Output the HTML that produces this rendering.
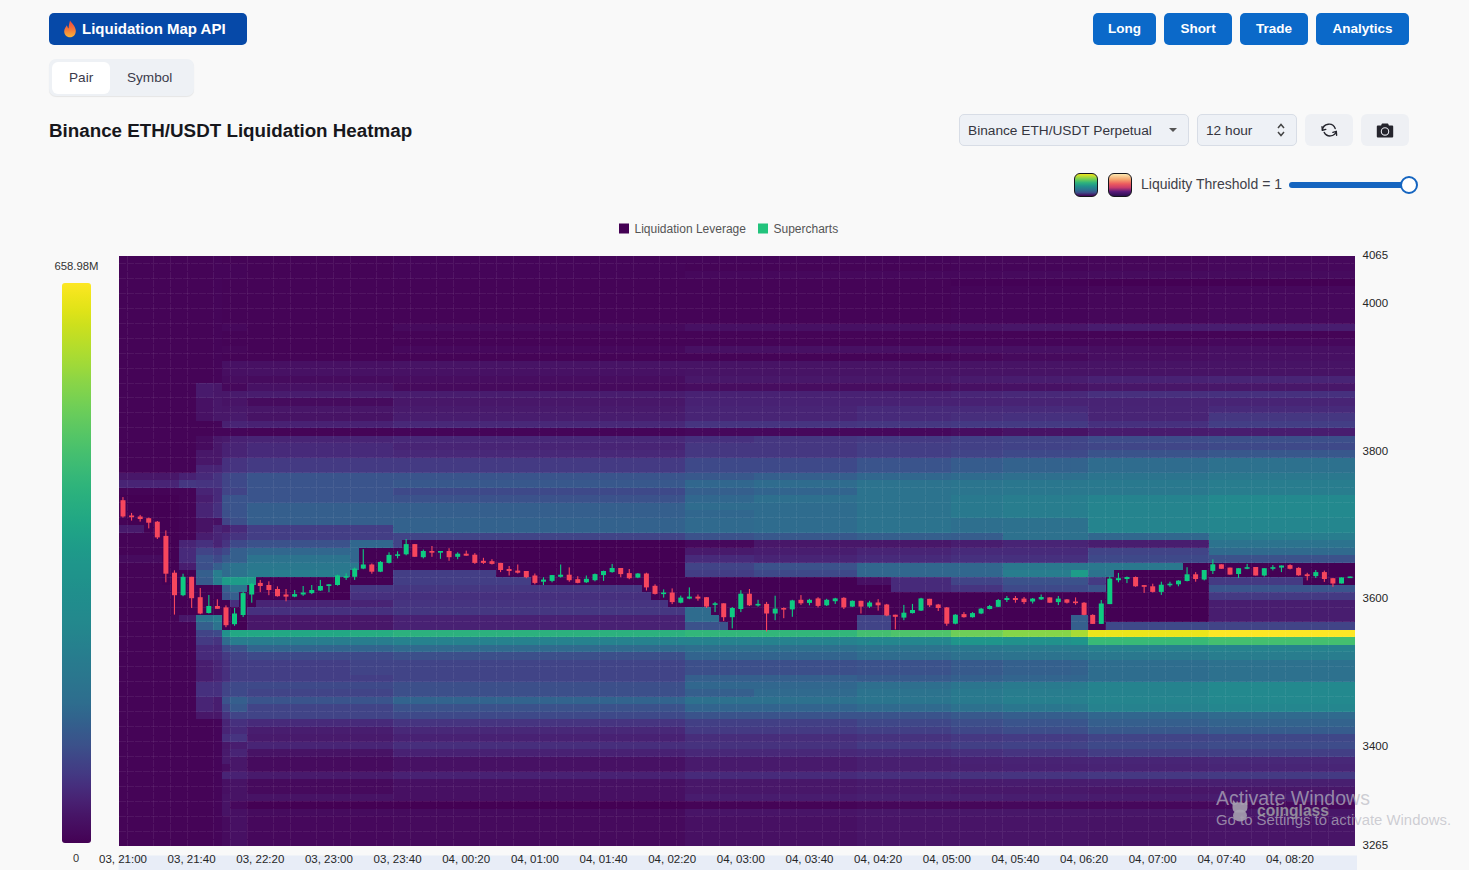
<!DOCTYPE html>
<html><head><meta charset="utf-8">
<style>
*{box-sizing:border-box;margin:0;padding:0}
html,body{width:1469px;height:870px;overflow:hidden;background:#f9f9f9;font-family:"Liberation Sans", sans-serif;}
.abs{position:absolute}
.btn{position:absolute;top:13px;height:32px;background:#0b69c9;color:#fff;border-radius:5px;font-weight:bold;font-size:13.5px;line-height:32px;text-align:center}
.api{position:absolute;left:49px;top:13px;width:198px;height:32px;background:#0649a8;border-radius:5px;color:#fff;font-size:15px;font-weight:bold;line-height:32px}
.seg{position:absolute;left:49px;top:59px;width:145px;height:37px;background:#eef1f5;border-radius:7px;box-shadow:0 1px 1px rgba(0,0,0,0.08)}
.pill{position:absolute;left:3px;top:3px;width:58px;height:32px;background:#fff;border-radius:6px}
.segt{position:absolute;top:0;line-height:37px;font-size:13.6px;color:#3b3b4b}
.title{position:absolute;left:49px;top:120px;font-size:18.8px;font-weight:bold;color:#17171c;white-space:nowrap}
.sel{position:absolute;top:114px;height:32px;background:#eef1f6;border:1px solid #d8dde6;border-radius:5px;font-size:13.7px;color:#353540;line-height:31px;padding-left:8px;white-space:nowrap}
.ib{position:absolute;top:114px;width:48px;height:32px;background:#eef0f4;border-radius:6px}
.sw{position:absolute;top:173px;width:24px;height:24px;border-radius:6px;border:1.6px solid #15151c}
.lt{position:absolute;left:1141px;top:175px;font-size:14px;color:#404048;white-space:nowrap;line-height:18px}
.wm{position:absolute;color:rgba(185,185,195,0.7);white-space:nowrap}
</style></head><body>
<div class="api"><svg class="abs" style="left:14px;top:7px" width="14" height="18" viewBox="0 0 14 18">
<defs><linearGradient id="fl" x1="0" y1="0" x2="0" y2="1"><stop offset="0" stop-color="#f0463c"/><stop offset="0.55" stop-color="#f47a3a"/><stop offset="1" stop-color="#fbb437"/></linearGradient></defs>
<path d="M7 0.5 C8.5 3 12.5 6 12.8 10.5 C13 14.5 10.3 17.3 7 17.3 C3.6 17.3 1 14.6 1.2 11 C1.4 8.2 3 7 3.8 5.2 C4.6 7 5 8 5.6 8.5 C5.8 5.5 6.3 3 7 0.5 Z" fill="url(#fl)"/>
</svg><span class="abs" style="left:33px;top:0">Liquidation Map API</span></div>
<div class="seg"><div class="pill"></div><span class="segt" style="left:20px">Pair</span><span class="segt" style="left:78px">Symbol</span></div>
<div class="title">Binance ETH/USDT Liquidation Heatmap</div>

<div class="btn" style="left:1093px;width:63px">Long</div>
<div class="btn" style="left:1164px;width:68px">Short</div>
<div class="btn" style="left:1240px;width:68px">Trade</div>
<div class="btn" style="left:1316px;width:93px">Analytics</div>

<div class="sel" style="left:959px;width:230px">Binance ETH/USDT Perpetual<svg class="abs" style="left:208px;top:12px" width="10" height="6"><path d="M1 1 L5 5 L9 1 Z" fill="#555"/></svg></div>
<div class="sel" style="left:1197px;width:100px">12 hour<svg class="abs" style="left:78px;top:7px" width="10" height="16" viewBox="0 0 10 16"><path d="M2 6 L5 2.5 L8 6 M2 10 L5 13.5 L8 10" stroke="#444" stroke-width="1.5" fill="none"/></svg></div>
<div class="ib" style="left:1305px"><svg class="abs" style="left:15px;top:7px" width="18" height="18" viewBox="0 0 18 18"><g fill="none" stroke="#25252d" stroke-width="1.4" stroke-linecap="round" stroke-linejoin="round"><path d="M2.4 9.2 A6.6 6.6 0 0 1 15.2 7.6"/><path d="M2.0 5.6 L2.4 9.2 L5.8 8.4"/><path d="M4.2 11.4 A6.6 6.6 0 0 0 16.3 10.4"/><path d="M16.6 14.2 L16.3 10.4 L12.9 11.4"/></g></svg></div>
<div class="ib" style="left:1361px"><svg class="abs" style="left:15px;top:9px" width="18" height="16" viewBox="0 0 18 16"><path d="M5.6 1.2 Q5.8 0.6 6.4 0.6 L11.6 0.6 Q12.2 0.6 12.4 1.2 L12.9 2.6 L16.2 2.6 Q17.2 2.6 17.2 3.6 L17.2 13.6 Q17.2 14.6 16.2 14.6 L1.8 14.6 Q0.8 14.6 0.8 13.6 L0.8 3.6 Q0.8 2.6 1.8 2.6 L5.1 2.6 Z" fill="#25252d"/><circle cx="9" cy="8.4" r="3.7" fill="none" stroke="#e8eaf0" stroke-width="1.1"/><circle cx="9" cy="8.4" r="2.3" fill="#25252d"/></svg></div>

<div class="sw" style="left:1074px;background:linear-gradient(to bottom,#f0e51c 0%,#7ad151 22%,#2db27d 40%,#21918c 55%,#2c718e 72%,#3b528b 84%,#440154 100%)"></div>
<div class="sw" style="left:1108px;background:linear-gradient(to bottom,#fce9b0 0%,#f4a46f 25%,#ec5a5e 45%,#c83c6c 62%,#5a1a7a 80%,#2a0f4e 100%)"></div>
<div class="lt">Liquidity Threshold = 1</div>
<div class="abs" style="left:1289px;top:181.5px;width:120px;height:6px;background:#1565c0;border-radius:3px"></div>
<div class="abs" style="left:1400px;top:176px;width:18px;height:18px;background:#fff;border:2.5px solid #1565c0;border-radius:50%"></div>

<svg class="abs" style="left:0;top:0" width="1469" height="870">
<defs><linearGradient id="cb" x1="0" y1="0" x2="0" y2="1"><stop offset="0.000" stop-color="#fde724"/><stop offset="0.025" stop-color="#eee51b"/><stop offset="0.050" stop-color="#dfe318"/><stop offset="0.075" stop-color="#cde01d"/><stop offset="0.100" stop-color="#bdde26"/><stop offset="0.125" stop-color="#addc30"/><stop offset="0.150" stop-color="#9dd93a"/><stop offset="0.175" stop-color="#8bd546"/><stop offset="0.200" stop-color="#7cd24f"/><stop offset="0.225" stop-color="#6dce58"/><stop offset="0.250" stop-color="#60c960"/><stop offset="0.275" stop-color="#53c567"/><stop offset="0.300" stop-color="#47c06e"/><stop offset="0.325" stop-color="#3dbb74"/><stop offset="0.350" stop-color="#33b679"/><stop offset="0.375" stop-color="#2bb17d"/><stop offset="0.400" stop-color="#26ac81"/><stop offset="0.425" stop-color="#21a784"/><stop offset="0.450" stop-color="#1fa187"/><stop offset="0.475" stop-color="#1e9b89"/><stop offset="0.500" stop-color="#1f968b"/><stop offset="0.525" stop-color="#1f938b"/><stop offset="0.550" stop-color="#208f8c"/><stop offset="0.575" stop-color="#218c8d"/><stop offset="0.600" stop-color="#23898d"/><stop offset="0.625" stop-color="#24858d"/><stop offset="0.650" stop-color="#26808e"/><stop offset="0.675" stop-color="#287b8e"/><stop offset="0.700" stop-color="#2a778e"/><stop offset="0.725" stop-color="#2c728e"/><stop offset="0.750" stop-color="#2e6d8e"/><stop offset="0.775" stop-color="#31648d"/><stop offset="0.800" stop-color="#365a8c"/><stop offset="0.825" stop-color="#3b518a"/><stop offset="0.850" stop-color="#3f4587"/><stop offset="0.875" stop-color="#433a83"/><stop offset="0.900" stop-color="#462d7c"/><stop offset="0.925" stop-color="#482172"/><stop offset="0.950" stop-color="#471567"/><stop offset="0.975" stop-color="#460b5e"/><stop offset="1.000" stop-color="#440154"/></linearGradient></defs>
<g font-family='"Liberation Sans", sans-serif' font-size="12" fill="#555">
<rect x="619" y="223.5" width="10" height="10" fill="#440154"/>
<text x="634.5" y="232.5">Liquidation Leverage</text>
<rect x="758" y="223.5" width="10" height="10" fill="#22c37c"/>
<text x="773.5" y="232.5">Supercharts</text>
</g>
<g font-family='"Liberation Sans", sans-serif' font-size="11" fill="#333">
<text x="76.5" y="270" text-anchor="middle" font-size="11.3">658.98M</text>
<text x="76" y="862" text-anchor="middle">0</text>
</g>
<rect x="62" y="283" width="29" height="560" rx="3" fill="url(#cb)"/>
<rect x="118.6" y="855.5" width="1238.4" height="15" fill="#e8edf7"/>
<g shape-rendering="crispEdges">
<rect x="118.70" y="838.53" width="94.69" height="7.77" fill="#450457"/>
<rect x="213.09" y="838.53" width="8.88" height="7.77" fill="#450559"/>
<rect x="221.68" y="838.53" width="8.88" height="7.77" fill="#460b5e"/>
<rect x="230.26" y="838.53" width="17.46" height="7.77" fill="#471063"/>
<rect x="247.42" y="838.53" width="146.18" height="7.77" fill="#46085c"/>
<rect x="393.30" y="838.53" width="292.06" height="7.77" fill="#460a5d"/>
<rect x="685.06" y="838.53" width="171.93" height="7.77" fill="#471063"/>
<rect x="856.69" y="838.53" width="231.99" height="7.77" fill="#481467"/>
<rect x="1088.38" y="838.53" width="120.44" height="7.77" fill="#471365"/>
<rect x="1208.52" y="838.53" width="146.18" height="7.77" fill="#481467"/>
<rect x="118.70" y="831.06" width="94.69" height="7.77" fill="#450457"/>
<rect x="213.09" y="831.06" width="8.88" height="7.77" fill="#450559"/>
<rect x="221.68" y="831.06" width="8.88" height="7.77" fill="#460b5e"/>
<rect x="230.26" y="831.06" width="17.46" height="7.77" fill="#471063"/>
<rect x="247.42" y="831.06" width="146.18" height="7.77" fill="#46085c"/>
<rect x="393.30" y="831.06" width="292.06" height="7.77" fill="#460a5d"/>
<rect x="685.06" y="831.06" width="171.93" height="7.77" fill="#471063"/>
<rect x="856.69" y="831.06" width="231.99" height="7.77" fill="#481467"/>
<rect x="1088.38" y="831.06" width="120.44" height="7.77" fill="#471365"/>
<rect x="1208.52" y="831.06" width="146.18" height="7.77" fill="#481467"/>
<rect x="118.70" y="823.59" width="94.69" height="7.77" fill="#450457"/>
<rect x="213.09" y="823.59" width="8.88" height="7.77" fill="#450559"/>
<rect x="221.68" y="823.59" width="8.88" height="7.77" fill="#460b5e"/>
<rect x="230.26" y="823.59" width="17.46" height="7.77" fill="#471063"/>
<rect x="247.42" y="823.59" width="146.18" height="7.77" fill="#46085c"/>
<rect x="393.30" y="823.59" width="292.06" height="7.77" fill="#460a5d"/>
<rect x="685.06" y="823.59" width="171.93" height="7.77" fill="#471063"/>
<rect x="856.69" y="823.59" width="231.99" height="7.77" fill="#481467"/>
<rect x="1088.38" y="823.59" width="120.44" height="7.77" fill="#471365"/>
<rect x="1208.52" y="823.59" width="146.18" height="7.77" fill="#481467"/>
<rect x="118.70" y="816.13" width="94.69" height="7.77" fill="#450457"/>
<rect x="213.09" y="816.13" width="8.88" height="7.77" fill="#450559"/>
<rect x="221.68" y="816.13" width="8.88" height="7.77" fill="#460b5e"/>
<rect x="230.26" y="816.13" width="17.46" height="7.77" fill="#471063"/>
<rect x="247.42" y="816.13" width="146.18" height="7.77" fill="#46085c"/>
<rect x="393.30" y="816.13" width="292.06" height="7.77" fill="#460a5d"/>
<rect x="685.06" y="816.13" width="171.93" height="7.77" fill="#471063"/>
<rect x="856.69" y="816.13" width="231.99" height="7.77" fill="#481467"/>
<rect x="1088.38" y="816.13" width="120.44" height="7.77" fill="#471365"/>
<rect x="1208.52" y="816.13" width="146.18" height="7.77" fill="#481467"/>
<rect x="118.70" y="808.66" width="94.69" height="7.77" fill="#450457"/>
<rect x="213.09" y="808.66" width="8.88" height="7.77" fill="#450559"/>
<rect x="221.68" y="808.66" width="8.88" height="7.77" fill="#471365"/>
<rect x="230.26" y="808.66" width="17.46" height="7.77" fill="#471063"/>
<rect x="247.42" y="808.66" width="437.94" height="7.77" fill="#460b5e"/>
<rect x="685.06" y="808.66" width="171.93" height="7.77" fill="#481467"/>
<rect x="856.69" y="808.66" width="231.99" height="7.77" fill="#481769"/>
<rect x="1088.38" y="808.66" width="120.44" height="7.77" fill="#481668"/>
<rect x="1208.52" y="808.66" width="146.18" height="7.77" fill="#481769"/>
<rect x="118.70" y="801.19" width="94.69" height="7.77" fill="#450457"/>
<rect x="213.09" y="801.19" width="8.88" height="7.77" fill="#450559"/>
<rect x="221.68" y="801.19" width="8.88" height="7.77" fill="#471365"/>
<rect x="230.26" y="801.19" width="17.46" height="7.77" fill="#46085c"/>
<rect x="247.42" y="801.19" width="437.94" height="7.77" fill="#440154"/>
<rect x="685.06" y="801.19" width="171.93" height="7.77" fill="#450457"/>
<rect x="856.69" y="801.19" width="146.18" height="7.77" fill="#46075a"/>
<rect x="1002.57" y="801.19" width="206.25" height="7.77" fill="#46085c"/>
<rect x="1208.52" y="801.19" width="146.18" height="7.77" fill="#460a5d"/>
<rect x="118.70" y="793.72" width="94.69" height="7.77" fill="#450457"/>
<rect x="213.09" y="793.72" width="8.88" height="7.77" fill="#450559"/>
<rect x="221.68" y="793.72" width="171.93" height="7.77" fill="#471365"/>
<rect x="393.30" y="793.72" width="292.06" height="7.77" fill="#471063"/>
<rect x="685.06" y="793.72" width="171.93" height="7.77" fill="#481c6e"/>
<rect x="856.69" y="793.72" width="146.18" height="7.77" fill="#481f70"/>
<rect x="1002.57" y="793.72" width="86.11" height="7.77" fill="#481d6f"/>
<rect x="1088.38" y="793.72" width="120.44" height="7.77" fill="#481b6d"/>
<rect x="1208.52" y="793.72" width="146.18" height="7.77" fill="#481c6e"/>
<rect x="118.70" y="786.25" width="94.69" height="7.77" fill="#450457"/>
<rect x="213.09" y="786.25" width="8.88" height="7.77" fill="#450559"/>
<rect x="221.68" y="786.25" width="8.88" height="7.77" fill="#471063"/>
<rect x="230.26" y="786.25" width="17.46" height="7.77" fill="#471365"/>
<rect x="247.42" y="786.25" width="146.18" height="7.77" fill="#460a5d"/>
<rect x="393.30" y="786.25" width="292.06" height="7.77" fill="#471063"/>
<rect x="685.06" y="786.25" width="171.93" height="7.77" fill="#481769"/>
<rect x="856.69" y="786.25" width="94.69" height="7.77" fill="#481a6c"/>
<rect x="951.08" y="786.25" width="137.60" height="7.77" fill="#48186a"/>
<rect x="1088.38" y="786.25" width="120.44" height="7.77" fill="#481668"/>
<rect x="1208.52" y="786.25" width="146.18" height="7.77" fill="#481769"/>
<rect x="118.70" y="778.78" width="94.69" height="7.77" fill="#450457"/>
<rect x="213.09" y="778.78" width="8.88" height="7.77" fill="#450559"/>
<rect x="221.68" y="778.78" width="8.88" height="7.77" fill="#471063"/>
<rect x="230.26" y="778.78" width="17.46" height="7.77" fill="#471365"/>
<rect x="247.42" y="778.78" width="146.18" height="7.77" fill="#460a5d"/>
<rect x="393.30" y="778.78" width="292.06" height="7.77" fill="#471063"/>
<rect x="685.06" y="778.78" width="171.93" height="7.77" fill="#481769"/>
<rect x="856.69" y="778.78" width="94.69" height="7.77" fill="#481a6c"/>
<rect x="951.08" y="778.78" width="51.79" height="7.77" fill="#481b6d"/>
<rect x="1002.57" y="778.78" width="86.11" height="7.77" fill="#481c6e"/>
<rect x="1088.38" y="778.78" width="120.44" height="7.77" fill="#481d6f"/>
<rect x="1208.52" y="778.78" width="146.18" height="7.77" fill="#481f70"/>
<rect x="118.70" y="771.32" width="94.69" height="7.77" fill="#450457"/>
<rect x="213.09" y="771.32" width="8.88" height="7.77" fill="#450559"/>
<rect x="221.68" y="771.32" width="8.88" height="7.77" fill="#482475"/>
<rect x="230.26" y="771.32" width="17.46" height="7.77" fill="#482173"/>
<rect x="247.42" y="771.32" width="146.18" height="7.77" fill="#481a6c"/>
<rect x="393.30" y="771.32" width="292.06" height="7.77" fill="#482173"/>
<rect x="685.06" y="771.32" width="171.93" height="7.77" fill="#472a7a"/>
<rect x="856.69" y="771.32" width="94.69" height="7.77" fill="#472f7d"/>
<rect x="951.08" y="771.32" width="51.79" height="7.77" fill="#46327e"/>
<rect x="1002.57" y="771.32" width="68.95" height="7.77" fill="#463480"/>
<rect x="1071.22" y="771.32" width="17.46" height="7.77" fill="#453581"/>
<rect x="1088.38" y="771.32" width="120.44" height="7.77" fill="#453882"/>
<rect x="1208.52" y="771.32" width="146.18" height="7.77" fill="#443a83"/>
<rect x="118.70" y="763.85" width="94.69" height="7.77" fill="#450457"/>
<rect x="213.09" y="763.85" width="8.88" height="7.77" fill="#450559"/>
<rect x="221.68" y="763.85" width="8.88" height="7.77" fill="#470e61"/>
<rect x="230.26" y="763.85" width="17.46" height="7.77" fill="#481769"/>
<rect x="247.42" y="763.85" width="146.18" height="7.77" fill="#460b5e"/>
<rect x="393.30" y="763.85" width="292.06" height="7.77" fill="#471164"/>
<rect x="685.06" y="763.85" width="171.93" height="7.77" fill="#481a6c"/>
<rect x="856.69" y="763.85" width="94.69" height="7.77" fill="#481f70"/>
<rect x="951.08" y="763.85" width="51.79" height="7.77" fill="#482071"/>
<rect x="1002.57" y="763.85" width="86.11" height="7.77" fill="#482173"/>
<rect x="1088.38" y="763.85" width="120.44" height="7.77" fill="#482374"/>
<rect x="1208.52" y="763.85" width="146.18" height="7.77" fill="#482576"/>
<rect x="118.70" y="756.38" width="94.69" height="7.77" fill="#450457"/>
<rect x="213.09" y="756.38" width="8.88" height="7.77" fill="#450559"/>
<rect x="221.68" y="756.38" width="8.88" height="7.77" fill="#481a6c"/>
<rect x="230.26" y="756.38" width="17.46" height="7.77" fill="#481769"/>
<rect x="247.42" y="756.38" width="146.18" height="7.77" fill="#460b5e"/>
<rect x="393.30" y="756.38" width="292.06" height="7.77" fill="#471164"/>
<rect x="685.06" y="756.38" width="171.93" height="7.77" fill="#481a6c"/>
<rect x="856.69" y="756.38" width="94.69" height="7.77" fill="#481f70"/>
<rect x="951.08" y="756.38" width="51.79" height="7.77" fill="#482173"/>
<rect x="1002.57" y="756.38" width="68.95" height="7.77" fill="#482374"/>
<rect x="1071.22" y="756.38" width="17.46" height="7.77" fill="#482475"/>
<rect x="1088.38" y="756.38" width="120.44" height="7.77" fill="#482576"/>
<rect x="1208.52" y="756.38" width="146.18" height="7.77" fill="#482878"/>
<rect x="118.70" y="748.91" width="94.69" height="7.77" fill="#450457"/>
<rect x="213.09" y="748.91" width="8.88" height="7.77" fill="#450559"/>
<rect x="221.68" y="748.91" width="8.88" height="7.77" fill="#481a6c"/>
<rect x="230.26" y="748.91" width="17.46" height="7.77" fill="#482475"/>
<rect x="247.42" y="748.91" width="146.18" height="7.77" fill="#471365"/>
<rect x="393.30" y="748.91" width="292.06" height="7.77" fill="#482173"/>
<rect x="685.06" y="748.91" width="171.93" height="7.77" fill="#482878"/>
<rect x="856.69" y="748.91" width="94.69" height="7.77" fill="#472a7a"/>
<rect x="951.08" y="748.91" width="51.79" height="7.77" fill="#472f7d"/>
<rect x="1002.57" y="748.91" width="68.95" height="7.77" fill="#463480"/>
<rect x="1071.22" y="748.91" width="17.46" height="7.77" fill="#453581"/>
<rect x="1088.38" y="748.91" width="120.44" height="7.77" fill="#433d84"/>
<rect x="1208.52" y="748.91" width="146.18" height="7.77" fill="#423f85"/>
<rect x="118.70" y="741.44" width="94.69" height="7.77" fill="#450457"/>
<rect x="213.09" y="741.44" width="8.88" height="7.77" fill="#450559"/>
<rect x="221.68" y="741.44" width="8.88" height="7.77" fill="#481769"/>
<rect x="230.26" y="741.44" width="17.46" height="7.77" fill="#481d6f"/>
<rect x="247.42" y="741.44" width="146.18" height="7.77" fill="#482475"/>
<rect x="393.30" y="741.44" width="292.06" height="7.77" fill="#472e7c"/>
<rect x="685.06" y="741.44" width="171.93" height="7.77" fill="#46327e"/>
<rect x="856.69" y="741.44" width="94.69" height="7.77" fill="#443a83"/>
<rect x="951.08" y="741.44" width="51.79" height="7.77" fill="#423f85"/>
<rect x="1002.57" y="741.44" width="68.95" height="7.77" fill="#414287"/>
<rect x="1071.22" y="741.44" width="17.46" height="7.77" fill="#414487"/>
<rect x="1088.38" y="741.44" width="120.44" height="7.77" fill="#3e4989"/>
<rect x="1208.52" y="741.44" width="146.18" height="7.77" fill="#3e4c8a"/>
<rect x="118.70" y="733.97" width="94.69" height="7.77" fill="#450457"/>
<rect x="213.09" y="733.97" width="8.88" height="7.77" fill="#450559"/>
<rect x="221.68" y="733.97" width="8.88" height="7.77" fill="#472e7c"/>
<rect x="230.26" y="733.97" width="17.46" height="7.77" fill="#463480"/>
<rect x="247.42" y="733.97" width="146.18" height="7.77" fill="#481a6c"/>
<rect x="393.30" y="733.97" width="292.06" height="7.77" fill="#482173"/>
<rect x="685.06" y="733.97" width="171.93" height="7.77" fill="#472d7b"/>
<rect x="856.69" y="733.97" width="94.69" height="7.77" fill="#46327e"/>
<rect x="951.08" y="733.97" width="51.79" height="7.77" fill="#453882"/>
<rect x="1002.57" y="733.97" width="68.95" height="7.77" fill="#443b84"/>
<rect x="1071.22" y="733.97" width="17.46" height="7.77" fill="#433d84"/>
<rect x="1088.38" y="733.97" width="120.44" height="7.77" fill="#414487"/>
<rect x="1208.52" y="733.97" width="146.18" height="7.77" fill="#3f4788"/>
<rect x="118.70" y="726.51" width="94.69" height="7.77" fill="#450457"/>
<rect x="213.09" y="726.51" width="8.88" height="7.77" fill="#450559"/>
<rect x="221.68" y="726.51" width="8.88" height="7.77" fill="#482475"/>
<rect x="230.26" y="726.51" width="17.46" height="7.77" fill="#472a7a"/>
<rect x="247.42" y="726.51" width="146.18" height="7.77" fill="#481d6f"/>
<rect x="393.30" y="726.51" width="292.06" height="7.77" fill="#482878"/>
<rect x="685.06" y="726.51" width="171.93" height="7.77" fill="#443a83"/>
<rect x="856.69" y="726.51" width="94.69" height="7.77" fill="#423f85"/>
<rect x="951.08" y="726.51" width="51.79" height="7.77" fill="#3f4788"/>
<rect x="1002.57" y="726.51" width="68.95" height="7.77" fill="#3d4d8a"/>
<rect x="1071.22" y="726.51" width="17.46" height="7.77" fill="#3d4e8a"/>
<rect x="1088.38" y="726.51" width="120.44" height="7.77" fill="#38588c"/>
<rect x="1208.52" y="726.51" width="146.18" height="7.77" fill="#365c8d"/>
<rect x="118.70" y="719.04" width="94.69" height="7.77" fill="#450457"/>
<rect x="213.09" y="719.04" width="8.88" height="7.77" fill="#450559"/>
<rect x="221.68" y="719.04" width="8.88" height="7.77" fill="#482475"/>
<rect x="230.26" y="719.04" width="17.46" height="7.77" fill="#46307e"/>
<rect x="247.42" y="719.04" width="146.18" height="7.77" fill="#472a7a"/>
<rect x="393.30" y="719.04" width="292.06" height="7.77" fill="#463480"/>
<rect x="685.06" y="719.04" width="171.93" height="7.77" fill="#423f85"/>
<rect x="856.69" y="719.04" width="94.69" height="7.77" fill="#3f4788"/>
<rect x="951.08" y="719.04" width="51.79" height="7.77" fill="#3d4e8a"/>
<rect x="1002.57" y="719.04" width="68.95" height="7.77" fill="#3a548c"/>
<rect x="1071.22" y="719.04" width="17.46" height="7.77" fill="#39558c"/>
<rect x="1088.38" y="719.04" width="120.44" height="7.77" fill="#355f8d"/>
<rect x="1208.52" y="719.04" width="146.18" height="7.77" fill="#33638d"/>
<rect x="118.70" y="711.57" width="77.53" height="7.77" fill="#450457"/>
<rect x="195.93" y="711.57" width="26.04" height="7.77" fill="#481769"/>
<rect x="221.68" y="711.57" width="8.88" height="7.77" fill="#463480"/>
<rect x="230.26" y="711.57" width="163.34" height="7.77" fill="#414487"/>
<rect x="393.30" y="711.57" width="292.06" height="7.77" fill="#3e4989"/>
<rect x="685.06" y="711.57" width="266.32" height="7.77" fill="#3a538b"/>
<rect x="951.08" y="711.57" width="51.79" height="7.77" fill="#38598c"/>
<rect x="1002.57" y="711.57" width="68.95" height="7.77" fill="#355e8d"/>
<rect x="1071.22" y="711.57" width="17.46" height="7.77" fill="#355f8d"/>
<rect x="1088.38" y="711.57" width="120.44" height="7.77" fill="#31668e"/>
<rect x="1208.52" y="711.57" width="146.18" height="7.77" fill="#306a8e"/>
<rect x="118.70" y="704.10" width="77.53" height="7.77" fill="#450457"/>
<rect x="195.93" y="704.10" width="17.46" height="7.77" fill="#482475"/>
<rect x="213.09" y="704.10" width="8.88" height="7.77" fill="#481d6f"/>
<rect x="221.68" y="704.10" width="8.88" height="7.77" fill="#414487"/>
<rect x="230.26" y="704.10" width="17.46" height="7.77" fill="#38588c"/>
<rect x="247.42" y="704.10" width="146.18" height="7.77" fill="#414487"/>
<rect x="393.30" y="704.10" width="292.06" height="7.77" fill="#3b528b"/>
<rect x="685.06" y="704.10" width="171.93" height="7.77" fill="#32648e"/>
<rect x="856.69" y="704.10" width="94.69" height="7.77" fill="#306a8e"/>
<rect x="951.08" y="704.10" width="51.79" height="7.77" fill="#2d718e"/>
<rect x="1002.57" y="704.10" width="68.95" height="7.77" fill="#2a768e"/>
<rect x="1071.22" y="704.10" width="17.46" height="7.77" fill="#2a788e"/>
<rect x="1088.38" y="704.10" width="120.44" height="7.77" fill="#26828e"/>
<rect x="1208.52" y="704.10" width="146.18" height="7.77" fill="#24868e"/>
<rect x="118.70" y="696.63" width="77.53" height="7.77" fill="#450457"/>
<rect x="195.93" y="696.63" width="17.46" height="7.77" fill="#482475"/>
<rect x="213.09" y="696.63" width="8.88" height="7.77" fill="#481d6f"/>
<rect x="221.68" y="696.63" width="8.88" height="7.77" fill="#3b528b"/>
<rect x="230.26" y="696.63" width="17.46" height="7.77" fill="#355f8d"/>
<rect x="247.42" y="696.63" width="146.18" height="7.77" fill="#3a548c"/>
<rect x="393.30" y="696.63" width="292.06" height="7.77" fill="#32648e"/>
<rect x="685.06" y="696.63" width="171.93" height="7.77" fill="#2d718e"/>
<rect x="856.69" y="696.63" width="94.69" height="7.77" fill="#2b758e"/>
<rect x="951.08" y="696.63" width="51.79" height="7.77" fill="#297a8e"/>
<rect x="1002.57" y="696.63" width="68.95" height="7.77" fill="#277f8e"/>
<rect x="1071.22" y="696.63" width="17.46" height="7.77" fill="#27808e"/>
<rect x="1088.38" y="696.63" width="120.44" height="7.77" fill="#25858e"/>
<rect x="1208.52" y="696.63" width="146.18" height="7.77" fill="#23898e"/>
<rect x="118.70" y="689.16" width="77.53" height="7.77" fill="#450457"/>
<rect x="195.93" y="689.16" width="26.04" height="7.77" fill="#46307e"/>
<rect x="221.68" y="689.16" width="8.88" height="7.77" fill="#414487"/>
<rect x="230.26" y="689.16" width="17.46" height="7.77" fill="#3e4989"/>
<rect x="247.42" y="689.16" width="146.18" height="7.77" fill="#414487"/>
<rect x="393.30" y="689.16" width="292.06" height="7.77" fill="#3c4f8a"/>
<rect x="685.06" y="689.16" width="68.95" height="7.77" fill="#355f8d"/>
<rect x="753.71" y="689.16" width="103.28" height="7.77" fill="#306a8e"/>
<rect x="856.69" y="689.16" width="94.69" height="7.77" fill="#2c738e"/>
<rect x="951.08" y="689.16" width="51.79" height="7.77" fill="#29798e"/>
<rect x="1002.57" y="689.16" width="68.95" height="7.77" fill="#287d8e"/>
<rect x="1071.22" y="689.16" width="17.46" height="7.77" fill="#277e8e"/>
<rect x="1088.38" y="689.16" width="120.44" height="7.77" fill="#25838e"/>
<rect x="1208.52" y="689.16" width="146.18" height="7.77" fill="#23898e"/>
<rect x="118.70" y="681.70" width="77.53" height="7.77" fill="#450457"/>
<rect x="195.93" y="681.70" width="26.04" height="7.77" fill="#46307e"/>
<rect x="221.68" y="681.70" width="8.88" height="7.77" fill="#414487"/>
<rect x="230.26" y="681.70" width="163.34" height="7.77" fill="#3e4989"/>
<rect x="393.30" y="681.70" width="292.06" height="7.77" fill="#3c4f8a"/>
<rect x="685.06" y="681.70" width="171.93" height="7.77" fill="#31678e"/>
<rect x="856.69" y="681.70" width="94.69" height="7.77" fill="#2e6f8e"/>
<rect x="951.08" y="681.70" width="51.79" height="7.77" fill="#2b758e"/>
<rect x="1002.57" y="681.70" width="68.95" height="7.77" fill="#297a8e"/>
<rect x="1071.22" y="681.70" width="17.46" height="7.77" fill="#287c8e"/>
<rect x="1088.38" y="681.70" width="120.44" height="7.77" fill="#25838e"/>
<rect x="1208.52" y="681.70" width="146.18" height="7.77" fill="#23898e"/>
<rect x="118.70" y="674.23" width="77.53" height="7.77" fill="#450457"/>
<rect x="195.93" y="674.23" width="17.46" height="7.77" fill="#481d6f"/>
<rect x="213.09" y="674.23" width="8.88" height="7.77" fill="#482475"/>
<rect x="221.68" y="674.23" width="8.88" height="7.77" fill="#46307e"/>
<rect x="230.26" y="674.23" width="163.34" height="7.77" fill="#433e85"/>
<rect x="393.30" y="674.23" width="292.06" height="7.77" fill="#414487"/>
<rect x="685.06" y="674.23" width="171.93" height="7.77" fill="#355f8d"/>
<rect x="856.69" y="674.23" width="94.69" height="7.77" fill="#375a8c"/>
<rect x="951.08" y="674.23" width="51.79" height="7.77" fill="#34608d"/>
<rect x="1002.57" y="674.23" width="68.95" height="7.77" fill="#32658e"/>
<rect x="1071.22" y="674.23" width="17.46" height="7.77" fill="#31668e"/>
<rect x="1088.38" y="674.23" width="120.44" height="7.77" fill="#2e6d8e"/>
<rect x="1208.52" y="674.23" width="146.18" height="7.77" fill="#2d718e"/>
<rect x="118.70" y="666.76" width="77.53" height="7.77" fill="#450457"/>
<rect x="195.93" y="666.76" width="17.46" height="7.77" fill="#481d6f"/>
<rect x="213.09" y="666.76" width="8.88" height="7.77" fill="#482475"/>
<rect x="221.68" y="666.76" width="8.88" height="7.77" fill="#46307e"/>
<rect x="230.26" y="666.76" width="120.44" height="7.77" fill="#433e85"/>
<rect x="350.39" y="666.76" width="334.97" height="7.77" fill="#414487"/>
<rect x="685.06" y="666.76" width="171.93" height="7.77" fill="#3c4f8a"/>
<rect x="856.69" y="666.76" width="94.69" height="7.77" fill="#3b528b"/>
<rect x="951.08" y="666.76" width="51.79" height="7.77" fill="#375a8c"/>
<rect x="1002.57" y="666.76" width="68.95" height="7.77" fill="#34608d"/>
<rect x="1071.22" y="666.76" width="17.46" height="7.77" fill="#33628d"/>
<rect x="1088.38" y="666.76" width="120.44" height="7.77" fill="#2e6d8e"/>
<rect x="1208.52" y="666.76" width="146.18" height="7.77" fill="#2d718e"/>
<rect x="118.70" y="659.29" width="77.53" height="7.77" fill="#450457"/>
<rect x="195.93" y="659.29" width="17.46" height="7.77" fill="#481d6f"/>
<rect x="213.09" y="659.29" width="8.88" height="7.77" fill="#482475"/>
<rect x="221.68" y="659.29" width="8.88" height="7.77" fill="#46307e"/>
<rect x="230.26" y="659.29" width="120.44" height="7.77" fill="#433e85"/>
<rect x="350.39" y="659.29" width="334.97" height="7.77" fill="#414487"/>
<rect x="685.06" y="659.29" width="171.93" height="7.77" fill="#3c4f8a"/>
<rect x="856.69" y="659.29" width="94.69" height="7.77" fill="#3b528b"/>
<rect x="951.08" y="659.29" width="51.79" height="7.77" fill="#375a8c"/>
<rect x="1002.57" y="659.29" width="68.95" height="7.77" fill="#34608d"/>
<rect x="1071.22" y="659.29" width="17.46" height="7.77" fill="#33628d"/>
<rect x="1088.38" y="659.29" width="120.44" height="7.77" fill="#2e6d8e"/>
<rect x="1208.52" y="659.29" width="146.18" height="7.77" fill="#2d718e"/>
<rect x="118.70" y="651.82" width="77.53" height="7.77" fill="#450457"/>
<rect x="195.93" y="651.82" width="26.04" height="7.77" fill="#472a7a"/>
<rect x="221.68" y="651.82" width="8.88" height="7.77" fill="#443a83"/>
<rect x="230.26" y="651.82" width="17.46" height="7.77" fill="#414487"/>
<rect x="247.42" y="651.82" width="146.18" height="7.77" fill="#3e4989"/>
<rect x="393.30" y="651.82" width="292.06" height="7.77" fill="#3c4f8a"/>
<rect x="685.06" y="651.82" width="171.93" height="7.77" fill="#32648e"/>
<rect x="856.69" y="651.82" width="94.69" height="7.77" fill="#2f6c8e"/>
<rect x="951.08" y="651.82" width="51.79" height="7.77" fill="#2d718e"/>
<rect x="1002.57" y="651.82" width="68.95" height="7.77" fill="#2c738e"/>
<rect x="1071.22" y="651.82" width="17.46" height="7.77" fill="#2b748e"/>
<rect x="1088.38" y="651.82" width="120.44" height="7.77" fill="#2a788e"/>
<rect x="1208.52" y="651.82" width="146.18" height="7.77" fill="#287d8e"/>
<rect x="118.70" y="644.35" width="77.53" height="7.77" fill="#450457"/>
<rect x="195.93" y="644.35" width="26.04" height="7.77" fill="#472a7a"/>
<rect x="221.68" y="644.35" width="8.88" height="7.77" fill="#3e4989"/>
<rect x="230.26" y="644.35" width="17.46" height="7.77" fill="#3b528b"/>
<rect x="247.42" y="644.35" width="146.18" height="7.77" fill="#32648e"/>
<rect x="393.30" y="644.35" width="292.06" height="7.77" fill="#306a8e"/>
<rect x="685.06" y="644.35" width="171.93" height="7.77" fill="#2e6f8e"/>
<rect x="856.69" y="644.35" width="94.69" height="7.77" fill="#2c738e"/>
<rect x="951.08" y="644.35" width="51.79" height="7.77" fill="#2a778e"/>
<rect x="1002.57" y="644.35" width="86.11" height="7.77" fill="#297a8e"/>
<rect x="1088.38" y="644.35" width="120.44" height="7.77" fill="#27808e"/>
<rect x="1208.52" y="644.35" width="146.18" height="7.77" fill="#26828e"/>
<rect x="118.70" y="636.89" width="77.53" height="7.77" fill="#450457"/>
<rect x="195.93" y="636.89" width="17.46" height="7.77" fill="#443a83"/>
<rect x="213.09" y="636.89" width="8.88" height="7.77" fill="#463480"/>
<rect x="221.68" y="636.89" width="8.88" height="7.77" fill="#2f6c8e"/>
<rect x="230.26" y="636.89" width="163.34" height="7.77" fill="#287d8e"/>
<rect x="393.30" y="636.89" width="463.69" height="7.77" fill="#26828e"/>
<rect x="856.69" y="636.89" width="94.69" height="7.77" fill="#24868e"/>
<rect x="951.08" y="636.89" width="51.79" height="7.77" fill="#1f958b"/>
<rect x="1002.57" y="636.89" width="68.95" height="7.77" fill="#21918c"/>
<rect x="1071.22" y="636.89" width="17.46" height="7.77" fill="#1f958b"/>
<rect x="1088.38" y="636.89" width="120.44" height="7.77" fill="#38b977"/>
<rect x="1208.52" y="636.89" width="146.18" height="7.77" fill="#44bf70"/>
<rect x="118.70" y="629.42" width="77.53" height="7.77" fill="#450457"/>
<rect x="195.93" y="629.42" width="17.46" height="7.77" fill="#414487"/>
<rect x="213.09" y="629.42" width="8.88" height="7.77" fill="#3e4989"/>
<rect x="221.68" y="629.42" width="8.88" height="7.77" fill="#21918c"/>
<rect x="230.26" y="629.42" width="120.44" height="7.77" fill="#22a884"/>
<rect x="350.39" y="629.42" width="43.21" height="7.77" fill="#26ad81"/>
<rect x="393.30" y="629.42" width="292.06" height="7.77" fill="#2cb17e"/>
<rect x="685.06" y="629.42" width="171.93" height="7.77" fill="#32b67a"/>
<rect x="856.69" y="629.42" width="34.62" height="7.77" fill="#44bf70"/>
<rect x="891.01" y="629.42" width="60.37" height="7.77" fill="#4ec36b"/>
<rect x="951.08" y="629.42" width="51.79" height="7.77" fill="#6ece58"/>
<rect x="1002.57" y="629.42" width="68.95" height="7.77" fill="#86d549"/>
<rect x="1071.22" y="629.42" width="17.46" height="7.77" fill="#a8db34"/>
<rect x="1088.38" y="629.42" width="120.44" height="7.77" fill="#ece51b"/>
<rect x="1208.52" y="629.42" width="146.18" height="7.77" fill="#fde725"/>
<rect x="118.70" y="621.95" width="77.53" height="7.77" fill="#450457"/>
<rect x="195.93" y="621.95" width="17.46" height="7.77" fill="#355f8d"/>
<rect x="213.09" y="621.95" width="8.88" height="7.77" fill="#2c738e"/>
<rect x="221.68" y="621.95" width="26.04" height="7.77" fill="#440154"/>
<rect x="247.42" y="621.95" width="146.18" height="7.77" fill="#481769"/>
<rect x="393.30" y="621.95" width="292.06" height="7.77" fill="#482173"/>
<rect x="685.06" y="621.95" width="43.21" height="7.77" fill="#3b528b"/>
<rect x="727.97" y="621.95" width="129.02" height="7.77" fill="#440154"/>
<rect x="856.69" y="621.95" width="34.62" height="7.77" fill="#414487"/>
<rect x="891.01" y="621.95" width="180.51" height="7.77" fill="#440154"/>
<rect x="1071.22" y="621.95" width="17.46" height="7.77" fill="#355f8d"/>
<rect x="1088.38" y="621.95" width="17.46" height="7.77" fill="#440154"/>
<rect x="1105.54" y="621.95" width="103.28" height="7.77" fill="#3e4989"/>
<rect x="1208.52" y="621.95" width="146.18" height="7.77" fill="#414487"/>
<rect x="118.70" y="614.48" width="60.37" height="7.77" fill="#450457"/>
<rect x="178.77" y="614.48" width="17.46" height="7.77" fill="#481769"/>
<rect x="195.93" y="614.48" width="17.46" height="7.77" fill="#2c738e"/>
<rect x="213.09" y="614.48" width="8.88" height="7.77" fill="#287d8e"/>
<rect x="221.68" y="614.48" width="26.04" height="7.77" fill="#440154"/>
<rect x="247.42" y="614.48" width="146.18" height="7.77" fill="#481769"/>
<rect x="393.30" y="614.48" width="292.06" height="7.77" fill="#482173"/>
<rect x="685.06" y="614.48" width="34.62" height="7.77" fill="#2f6c8e"/>
<rect x="719.39" y="614.48" width="137.60" height="7.77" fill="#440154"/>
<rect x="856.69" y="614.48" width="34.62" height="7.77" fill="#414487"/>
<rect x="891.01" y="614.48" width="180.51" height="7.77" fill="#440154"/>
<rect x="1071.22" y="614.48" width="17.46" height="7.77" fill="#355f8d"/>
<rect x="1088.38" y="614.48" width="120.44" height="7.77" fill="#440154"/>
<rect x="1208.52" y="614.48" width="146.18" height="7.77" fill="#481d6f"/>
<rect x="118.70" y="607.01" width="51.79" height="7.77" fill="#450457"/>
<rect x="170.19" y="607.01" width="77.53" height="7.77" fill="#440154"/>
<rect x="247.42" y="607.01" width="146.18" height="7.77" fill="#46307e"/>
<rect x="393.30" y="607.01" width="292.06" height="7.77" fill="#453781"/>
<rect x="685.06" y="607.01" width="26.04" height="7.77" fill="#2f6c8e"/>
<rect x="710.81" y="607.01" width="498.01" height="7.77" fill="#440154"/>
<rect x="1208.52" y="607.01" width="146.18" height="7.77" fill="#481d6f"/>
<rect x="118.70" y="599.54" width="51.79" height="7.77" fill="#450457"/>
<rect x="170.19" y="599.54" width="60.37" height="7.77" fill="#440154"/>
<rect x="230.26" y="599.54" width="8.88" height="7.77" fill="#472f7d"/>
<rect x="238.84" y="599.54" width="17.46" height="7.77" fill="#440154"/>
<rect x="256.00" y="599.54" width="137.60" height="7.77" fill="#482475"/>
<rect x="393.30" y="599.54" width="274.90" height="7.77" fill="#463480"/>
<rect x="667.90" y="599.54" width="540.92" height="7.77" fill="#440154"/>
<rect x="1208.52" y="599.54" width="146.18" height="7.77" fill="#481d6f"/>
<rect x="118.70" y="592.08" width="51.79" height="7.77" fill="#450457"/>
<rect x="170.19" y="592.08" width="51.79" height="7.77" fill="#440154"/>
<rect x="221.68" y="592.08" width="8.88" height="7.77" fill="#3b528b"/>
<rect x="230.26" y="592.08" width="8.88" height="7.77" fill="#355f8d"/>
<rect x="238.84" y="592.08" width="111.86" height="7.77" fill="#440154"/>
<rect x="350.39" y="592.08" width="300.64" height="7.77" fill="#46307e"/>
<rect x="650.74" y="592.08" width="558.08" height="7.77" fill="#440154"/>
<rect x="1208.52" y="592.08" width="146.18" height="7.77" fill="#443a83"/>
<rect x="118.70" y="584.61" width="51.79" height="7.77" fill="#450457"/>
<rect x="170.19" y="584.61" width="43.21" height="7.77" fill="#440154"/>
<rect x="213.09" y="584.61" width="8.88" height="7.77" fill="#450559"/>
<rect x="221.68" y="584.61" width="8.88" height="7.77" fill="#355f8d"/>
<rect x="230.26" y="584.61" width="17.46" height="7.77" fill="#2c738e"/>
<rect x="247.42" y="584.61" width="103.28" height="7.77" fill="#440154"/>
<rect x="350.39" y="584.61" width="292.06" height="7.77" fill="#453781"/>
<rect x="642.16" y="584.61" width="249.16" height="7.77" fill="#440154"/>
<rect x="891.01" y="584.61" width="60.37" height="7.77" fill="#472a7a"/>
<rect x="951.08" y="584.61" width="51.79" height="7.77" fill="#463480"/>
<rect x="1002.57" y="584.61" width="86.11" height="7.77" fill="#3e4989"/>
<rect x="1088.38" y="584.61" width="17.46" height="7.77" fill="#3b528b"/>
<rect x="1105.54" y="584.61" width="103.28" height="7.77" fill="#440154"/>
<rect x="1208.52" y="584.61" width="146.18" height="7.77" fill="#3a548c"/>
<rect x="118.70" y="577.14" width="43.21" height="7.77" fill="#450457"/>
<rect x="161.61" y="577.14" width="34.62" height="7.77" fill="#440154"/>
<rect x="195.93" y="577.14" width="17.46" height="7.77" fill="#375a8c"/>
<rect x="213.09" y="577.14" width="8.88" height="7.77" fill="#287d8e"/>
<rect x="221.68" y="577.14" width="34.62" height="7.77" fill="#1e9c89"/>
<rect x="256.00" y="577.14" width="137.60" height="7.77" fill="#440154"/>
<rect x="393.30" y="577.14" width="137.60" height="7.77" fill="#433e85"/>
<rect x="530.60" y="577.14" width="326.39" height="7.77" fill="#440154"/>
<rect x="856.69" y="577.14" width="34.62" height="7.77" fill="#471063"/>
<rect x="891.01" y="577.14" width="60.37" height="7.77" fill="#472a7a"/>
<rect x="951.08" y="577.14" width="51.79" height="7.77" fill="#414487"/>
<rect x="1002.57" y="577.14" width="86.11" height="7.77" fill="#3b528b"/>
<rect x="1088.38" y="577.14" width="17.46" height="7.77" fill="#443a83"/>
<rect x="1105.54" y="577.14" width="103.28" height="7.77" fill="#440154"/>
<rect x="1208.52" y="577.14" width="94.69" height="7.77" fill="#443a83"/>
<rect x="1302.91" y="577.14" width="51.79" height="7.77" fill="#440154"/>
<rect x="118.70" y="569.67" width="43.21" height="7.77" fill="#450457"/>
<rect x="161.61" y="569.67" width="34.62" height="7.77" fill="#440154"/>
<rect x="195.93" y="569.67" width="17.46" height="7.77" fill="#355f8d"/>
<rect x="213.09" y="569.67" width="8.88" height="7.77" fill="#287d8e"/>
<rect x="221.68" y="569.67" width="8.88" height="7.77" fill="#2f6c8e"/>
<rect x="230.26" y="569.67" width="17.46" height="7.77" fill="#2c738e"/>
<rect x="247.42" y="569.67" width="103.28" height="7.77" fill="#287d8e"/>
<rect x="350.39" y="569.67" width="43.21" height="7.77" fill="#440154"/>
<rect x="393.30" y="569.67" width="103.28" height="7.77" fill="#433e85"/>
<rect x="496.28" y="569.67" width="189.09" height="7.77" fill="#440154"/>
<rect x="685.06" y="569.67" width="68.95" height="7.77" fill="#433e85"/>
<rect x="753.71" y="569.67" width="103.28" height="7.77" fill="#3e4989"/>
<rect x="856.69" y="569.67" width="146.18" height="7.77" fill="#31678e"/>
<rect x="1002.57" y="569.67" width="68.95" height="7.77" fill="#287d8e"/>
<rect x="1071.22" y="569.67" width="17.46" height="7.77" fill="#1e9c89"/>
<rect x="1088.38" y="569.67" width="26.04" height="7.77" fill="#2c738e"/>
<rect x="1114.12" y="569.67" width="240.58" height="7.77" fill="#440154"/>
<rect x="118.70" y="562.20" width="43.21" height="7.77" fill="#450457"/>
<rect x="161.61" y="562.20" width="17.46" height="7.77" fill="#440154"/>
<rect x="178.77" y="562.20" width="17.46" height="7.77" fill="#481d6f"/>
<rect x="195.93" y="562.20" width="17.46" height="7.77" fill="#3c4f8a"/>
<rect x="213.09" y="562.20" width="8.88" height="7.77" fill="#355f8d"/>
<rect x="221.68" y="562.20" width="8.88" height="7.77" fill="#2f6c8e"/>
<rect x="230.26" y="562.20" width="17.46" height="7.77" fill="#2c738e"/>
<rect x="247.42" y="562.20" width="111.86" height="7.77" fill="#2a788e"/>
<rect x="358.98" y="562.20" width="326.39" height="7.77" fill="#440154"/>
<rect x="685.06" y="562.20" width="68.95" height="7.77" fill="#414487"/>
<rect x="753.71" y="562.20" width="103.28" height="7.77" fill="#3b528b"/>
<rect x="856.69" y="562.20" width="146.18" height="7.77" fill="#31678e"/>
<rect x="1002.57" y="562.20" width="180.51" height="7.77" fill="#2a788e"/>
<rect x="1182.78" y="562.20" width="171.93" height="7.77" fill="#440154"/>
<rect x="118.70" y="554.73" width="43.21" height="7.77" fill="#460b5e"/>
<rect x="161.61" y="554.73" width="17.46" height="7.77" fill="#440154"/>
<rect x="178.77" y="554.73" width="17.46" height="7.77" fill="#472a7a"/>
<rect x="195.93" y="554.73" width="17.46" height="7.77" fill="#3b528b"/>
<rect x="213.09" y="554.73" width="8.88" height="7.77" fill="#3e4989"/>
<rect x="221.68" y="554.73" width="8.88" height="7.77" fill="#375a8c"/>
<rect x="230.26" y="554.73" width="17.46" height="7.77" fill="#355f8d"/>
<rect x="247.42" y="554.73" width="103.28" height="7.77" fill="#2c738e"/>
<rect x="350.39" y="554.73" width="8.88" height="7.77" fill="#31678e"/>
<rect x="358.98" y="554.73" width="326.39" height="7.77" fill="#440154"/>
<rect x="685.06" y="554.73" width="68.95" height="7.77" fill="#472a7a"/>
<rect x="753.71" y="554.73" width="103.28" height="7.77" fill="#482475"/>
<rect x="856.69" y="554.73" width="94.69" height="7.77" fill="#472a7a"/>
<rect x="951.08" y="554.73" width="137.60" height="7.77" fill="#46307e"/>
<rect x="1088.38" y="554.73" width="120.44" height="7.77" fill="#3e4989"/>
<rect x="1208.52" y="554.73" width="146.18" height="7.77" fill="#3b528b"/>
<rect x="118.70" y="547.27" width="43.21" height="7.77" fill="#450457"/>
<rect x="161.61" y="547.27" width="17.46" height="7.77" fill="#440154"/>
<rect x="178.77" y="547.27" width="17.46" height="7.77" fill="#472a7a"/>
<rect x="195.93" y="547.27" width="17.46" height="7.77" fill="#414487"/>
<rect x="213.09" y="547.27" width="8.88" height="7.77" fill="#433e85"/>
<rect x="221.68" y="547.27" width="8.88" height="7.77" fill="#3e4989"/>
<rect x="230.26" y="547.27" width="17.46" height="7.77" fill="#355f8d"/>
<rect x="247.42" y="547.27" width="111.86" height="7.77" fill="#31678e"/>
<rect x="358.98" y="547.27" width="326.39" height="7.77" fill="#440154"/>
<rect x="685.06" y="547.27" width="68.95" height="7.77" fill="#481a6c"/>
<rect x="753.71" y="547.27" width="103.28" height="7.77" fill="#481d6f"/>
<rect x="856.69" y="547.27" width="94.69" height="7.77" fill="#482475"/>
<rect x="951.08" y="547.27" width="137.60" height="7.77" fill="#472a7a"/>
<rect x="1088.38" y="547.27" width="120.44" height="7.77" fill="#414487"/>
<rect x="1208.52" y="547.27" width="146.18" height="7.77" fill="#306a8e"/>
<rect x="118.70" y="539.80" width="43.21" height="7.77" fill="#450457"/>
<rect x="161.61" y="539.80" width="17.46" height="7.77" fill="#440154"/>
<rect x="178.77" y="539.80" width="17.46" height="7.77" fill="#482475"/>
<rect x="195.93" y="539.80" width="17.46" height="7.77" fill="#46307e"/>
<rect x="213.09" y="539.80" width="8.88" height="7.77" fill="#482475"/>
<rect x="221.68" y="539.80" width="8.88" height="7.77" fill="#463480"/>
<rect x="230.26" y="539.80" width="17.46" height="7.77" fill="#3e4989"/>
<rect x="247.42" y="539.80" width="103.28" height="7.77" fill="#3b528b"/>
<rect x="350.39" y="539.80" width="43.21" height="7.77" fill="#31678e"/>
<rect x="393.30" y="539.80" width="8.88" height="7.77" fill="#414487"/>
<rect x="401.88" y="539.80" width="283.48" height="7.77" fill="#440154"/>
<rect x="685.06" y="539.80" width="68.95" height="7.77" fill="#46085c"/>
<rect x="753.71" y="539.80" width="197.67" height="7.77" fill="#481769"/>
<rect x="951.08" y="539.80" width="51.79" height="7.77" fill="#481d6f"/>
<rect x="1002.57" y="539.80" width="86.11" height="7.77" fill="#482475"/>
<rect x="1088.38" y="539.80" width="120.44" height="7.77" fill="#481d6f"/>
<rect x="1208.52" y="539.80" width="146.18" height="7.77" fill="#2c738e"/>
<rect x="118.70" y="532.33" width="34.62" height="7.77" fill="#450457"/>
<rect x="153.03" y="532.33" width="26.04" height="7.77" fill="#440154"/>
<rect x="178.77" y="532.33" width="17.46" height="7.77" fill="#450457"/>
<rect x="195.93" y="532.33" width="17.46" height="7.77" fill="#481d6f"/>
<rect x="213.09" y="532.33" width="8.88" height="7.77" fill="#482475"/>
<rect x="221.68" y="532.33" width="8.88" height="7.77" fill="#472a7a"/>
<rect x="230.26" y="532.33" width="17.46" height="7.77" fill="#463480"/>
<rect x="247.42" y="532.33" width="146.18" height="7.77" fill="#433e85"/>
<rect x="393.30" y="532.33" width="292.06" height="7.77" fill="#414487"/>
<rect x="685.06" y="532.33" width="68.95" height="7.77" fill="#3b528b"/>
<rect x="753.71" y="532.33" width="103.28" height="7.77" fill="#38588c"/>
<rect x="856.69" y="532.33" width="94.69" height="7.77" fill="#355f8d"/>
<rect x="951.08" y="532.33" width="51.79" height="7.77" fill="#365d8d"/>
<rect x="1002.57" y="532.33" width="86.11" height="7.77" fill="#2d718e"/>
<rect x="1088.38" y="532.33" width="120.44" height="7.77" fill="#31678e"/>
<rect x="1208.52" y="532.33" width="146.18" height="7.77" fill="#287d8e"/>
<rect x="118.70" y="524.86" width="26.04" height="7.77" fill="#481a6c"/>
<rect x="144.44" y="524.86" width="34.62" height="7.77" fill="#440154"/>
<rect x="178.77" y="524.86" width="17.46" height="7.77" fill="#450457"/>
<rect x="195.93" y="524.86" width="17.46" height="7.77" fill="#471365"/>
<rect x="213.09" y="524.86" width="8.88" height="7.77" fill="#482475"/>
<rect x="221.68" y="524.86" width="8.88" height="7.77" fill="#481d6f"/>
<rect x="230.26" y="524.86" width="17.46" height="7.77" fill="#472a7a"/>
<rect x="247.42" y="524.86" width="146.18" height="7.77" fill="#433e85"/>
<rect x="393.30" y="524.86" width="292.06" height="7.77" fill="#33628d"/>
<rect x="685.06" y="524.86" width="68.95" height="7.77" fill="#306a8e"/>
<rect x="753.71" y="524.86" width="103.28" height="7.77" fill="#2f6c8e"/>
<rect x="856.69" y="524.86" width="94.69" height="7.77" fill="#2c738e"/>
<rect x="951.08" y="524.86" width="51.79" height="7.77" fill="#2e6f8e"/>
<rect x="1002.57" y="524.86" width="86.11" height="7.77" fill="#2d718e"/>
<rect x="1088.38" y="524.86" width="120.44" height="7.77" fill="#25848e"/>
<rect x="1208.52" y="524.86" width="146.18" height="7.77" fill="#24868e"/>
<rect x="118.70" y="517.39" width="8.88" height="7.77" fill="#450457"/>
<rect x="127.28" y="517.39" width="51.79" height="7.77" fill="#440154"/>
<rect x="178.77" y="517.39" width="17.46" height="7.77" fill="#450457"/>
<rect x="195.93" y="517.39" width="17.46" height="7.77" fill="#471365"/>
<rect x="213.09" y="517.39" width="8.88" height="7.77" fill="#471063"/>
<rect x="221.68" y="517.39" width="8.88" height="7.77" fill="#414487"/>
<rect x="230.26" y="517.39" width="17.46" height="7.77" fill="#3c4f8a"/>
<rect x="247.42" y="517.39" width="146.18" height="7.77" fill="#355f8d"/>
<rect x="393.30" y="517.39" width="292.06" height="7.77" fill="#33628d"/>
<rect x="685.06" y="517.39" width="68.95" height="7.77" fill="#306a8e"/>
<rect x="753.71" y="517.39" width="103.28" height="7.77" fill="#2f6c8e"/>
<rect x="856.69" y="517.39" width="94.69" height="7.77" fill="#2c738e"/>
<rect x="951.08" y="517.39" width="51.79" height="7.77" fill="#2e6f8e"/>
<rect x="1002.57" y="517.39" width="86.11" height="7.77" fill="#2d718e"/>
<rect x="1088.38" y="517.39" width="120.44" height="7.77" fill="#25848e"/>
<rect x="1208.52" y="517.39" width="146.18" height="7.77" fill="#24868e"/>
<rect x="118.70" y="509.92" width="60.37" height="7.77" fill="#440154"/>
<rect x="178.77" y="509.92" width="17.46" height="7.77" fill="#450457"/>
<rect x="195.93" y="509.92" width="17.46" height="7.77" fill="#482475"/>
<rect x="213.09" y="509.92" width="8.88" height="7.77" fill="#46307e"/>
<rect x="221.68" y="509.92" width="8.88" height="7.77" fill="#3c4f8a"/>
<rect x="230.26" y="509.92" width="17.46" height="7.77" fill="#3a548c"/>
<rect x="247.42" y="509.92" width="437.94" height="7.77" fill="#355f8d"/>
<rect x="685.06" y="509.92" width="68.95" height="7.77" fill="#31678e"/>
<rect x="753.71" y="509.92" width="103.28" height="7.77" fill="#2f6c8e"/>
<rect x="856.69" y="509.92" width="94.69" height="7.77" fill="#2c738e"/>
<rect x="951.08" y="509.92" width="51.79" height="7.77" fill="#29798e"/>
<rect x="1002.57" y="509.92" width="68.95" height="7.77" fill="#287d8e"/>
<rect x="1071.22" y="509.92" width="17.46" height="7.77" fill="#277e8e"/>
<rect x="1088.38" y="509.92" width="120.44" height="7.77" fill="#25848e"/>
<rect x="1208.52" y="509.92" width="146.18" height="7.77" fill="#23898e"/>
<rect x="118.70" y="502.46" width="60.37" height="7.77" fill="#440154"/>
<rect x="178.77" y="502.46" width="17.46" height="7.77" fill="#450457"/>
<rect x="195.93" y="502.46" width="17.46" height="7.77" fill="#482475"/>
<rect x="213.09" y="502.46" width="8.88" height="7.77" fill="#46307e"/>
<rect x="221.68" y="502.46" width="8.88" height="7.77" fill="#3b528b"/>
<rect x="230.26" y="502.46" width="17.46" height="7.77" fill="#3a548c"/>
<rect x="247.42" y="502.46" width="437.94" height="7.77" fill="#355f8d"/>
<rect x="685.06" y="502.46" width="171.93" height="7.77" fill="#2f6c8e"/>
<rect x="856.69" y="502.46" width="94.69" height="7.77" fill="#2c738e"/>
<rect x="951.08" y="502.46" width="51.79" height="7.77" fill="#29798e"/>
<rect x="1002.57" y="502.46" width="68.95" height="7.77" fill="#287d8e"/>
<rect x="1071.22" y="502.46" width="17.46" height="7.77" fill="#277e8e"/>
<rect x="1088.38" y="502.46" width="120.44" height="7.77" fill="#25848e"/>
<rect x="1208.52" y="502.46" width="146.18" height="7.77" fill="#23898e"/>
<rect x="118.70" y="494.99" width="60.37" height="7.77" fill="#440154"/>
<rect x="178.77" y="494.99" width="17.46" height="7.77" fill="#450457"/>
<rect x="195.93" y="494.99" width="17.46" height="7.77" fill="#481d6f"/>
<rect x="213.09" y="494.99" width="8.88" height="7.77" fill="#472a7a"/>
<rect x="221.68" y="494.99" width="8.88" height="7.77" fill="#3b528b"/>
<rect x="230.26" y="494.99" width="163.34" height="7.77" fill="#3a548c"/>
<rect x="393.30" y="494.99" width="292.06" height="7.77" fill="#3b528b"/>
<rect x="685.06" y="494.99" width="68.95" height="7.77" fill="#31678e"/>
<rect x="753.71" y="494.99" width="103.28" height="7.77" fill="#2e6f8e"/>
<rect x="856.69" y="494.99" width="94.69" height="7.77" fill="#2c738e"/>
<rect x="951.08" y="494.99" width="51.79" height="7.77" fill="#29798e"/>
<rect x="1002.57" y="494.99" width="68.95" height="7.77" fill="#287d8e"/>
<rect x="1071.22" y="494.99" width="17.46" height="7.77" fill="#277e8e"/>
<rect x="1088.38" y="494.99" width="120.44" height="7.77" fill="#25838e"/>
<rect x="1208.52" y="494.99" width="146.18" height="7.77" fill="#23898e"/>
<rect x="118.70" y="487.52" width="77.53" height="7.77" fill="#450457"/>
<rect x="195.93" y="487.52" width="17.46" height="7.77" fill="#482475"/>
<rect x="213.09" y="487.52" width="8.88" height="7.77" fill="#472a7a"/>
<rect x="221.68" y="487.52" width="26.04" height="7.77" fill="#414487"/>
<rect x="247.42" y="487.52" width="146.18" height="7.77" fill="#3a548c"/>
<rect x="393.30" y="487.52" width="292.06" height="7.77" fill="#3e4989"/>
<rect x="685.06" y="487.52" width="68.95" height="7.77" fill="#355f8d"/>
<rect x="753.71" y="487.52" width="103.28" height="7.77" fill="#32648e"/>
<rect x="856.69" y="487.52" width="94.69" height="7.77" fill="#2c738e"/>
<rect x="951.08" y="487.52" width="51.79" height="7.77" fill="#2b758e"/>
<rect x="1002.57" y="487.52" width="68.95" height="7.77" fill="#2a778e"/>
<rect x="1071.22" y="487.52" width="137.60" height="7.77" fill="#2a788e"/>
<rect x="1208.52" y="487.52" width="146.18" height="7.77" fill="#287d8e"/>
<rect x="118.70" y="480.05" width="60.37" height="7.77" fill="#482475"/>
<rect x="178.77" y="480.05" width="17.46" height="7.77" fill="#453781"/>
<rect x="195.93" y="480.05" width="26.04" height="7.77" fill="#463480"/>
<rect x="221.68" y="480.05" width="8.88" height="7.77" fill="#414487"/>
<rect x="230.26" y="480.05" width="17.46" height="7.77" fill="#3e4989"/>
<rect x="247.42" y="480.05" width="146.18" height="7.77" fill="#3a548c"/>
<rect x="393.30" y="480.05" width="292.06" height="7.77" fill="#38588c"/>
<rect x="685.06" y="480.05" width="68.95" height="7.77" fill="#31678e"/>
<rect x="753.71" y="480.05" width="103.28" height="7.77" fill="#2f6c8e"/>
<rect x="856.69" y="480.05" width="94.69" height="7.77" fill="#2c738e"/>
<rect x="951.08" y="480.05" width="51.79" height="7.77" fill="#2b758e"/>
<rect x="1002.57" y="480.05" width="68.95" height="7.77" fill="#2a778e"/>
<rect x="1071.22" y="480.05" width="17.46" height="7.77" fill="#2a788e"/>
<rect x="1088.38" y="480.05" width="120.44" height="7.77" fill="#29798e"/>
<rect x="1208.52" y="480.05" width="146.18" height="7.77" fill="#287d8e"/>
<rect x="118.70" y="472.58" width="60.37" height="7.77" fill="#481769"/>
<rect x="178.77" y="472.58" width="17.46" height="7.77" fill="#482173"/>
<rect x="195.93" y="472.58" width="17.46" height="7.77" fill="#472a7a"/>
<rect x="213.09" y="472.58" width="8.88" height="7.77" fill="#463480"/>
<rect x="221.68" y="472.58" width="8.88" height="7.77" fill="#414487"/>
<rect x="230.26" y="472.58" width="17.46" height="7.77" fill="#3e4989"/>
<rect x="247.42" y="472.58" width="437.94" height="7.77" fill="#3a548c"/>
<rect x="685.06" y="472.58" width="68.95" height="7.77" fill="#38588c"/>
<rect x="753.71" y="472.58" width="103.28" height="7.77" fill="#355f8d"/>
<rect x="856.69" y="472.58" width="94.69" height="7.77" fill="#31678e"/>
<rect x="951.08" y="472.58" width="51.79" height="7.77" fill="#2f6b8e"/>
<rect x="1002.57" y="472.58" width="68.95" height="7.77" fill="#2e6f8e"/>
<rect x="1071.22" y="472.58" width="17.46" height="7.77" fill="#2d708e"/>
<rect x="1088.38" y="472.58" width="120.44" height="7.77" fill="#2b748e"/>
<rect x="1208.52" y="472.58" width="146.18" height="7.77" fill="#2a788e"/>
<rect x="118.70" y="465.11" width="77.53" height="7.77" fill="#450457"/>
<rect x="195.93" y="465.11" width="26.04" height="7.77" fill="#482475"/>
<rect x="221.68" y="465.11" width="8.88" height="7.77" fill="#46307e"/>
<rect x="230.26" y="465.11" width="17.46" height="7.77" fill="#463480"/>
<rect x="247.42" y="465.11" width="437.94" height="7.77" fill="#443a83"/>
<rect x="685.06" y="465.11" width="171.93" height="7.77" fill="#3e4989"/>
<rect x="856.69" y="465.11" width="94.69" height="7.77" fill="#3a548c"/>
<rect x="951.08" y="465.11" width="51.79" height="7.77" fill="#365c8d"/>
<rect x="1002.57" y="465.11" width="68.95" height="7.77" fill="#33628d"/>
<rect x="1071.22" y="465.11" width="17.46" height="7.77" fill="#33638d"/>
<rect x="1088.38" y="465.11" width="120.44" height="7.77" fill="#2f6c8e"/>
<rect x="1208.52" y="465.11" width="146.18" height="7.77" fill="#2d718e"/>
<rect x="118.70" y="457.65" width="77.53" height="7.77" fill="#450457"/>
<rect x="195.93" y="457.65" width="26.04" height="7.77" fill="#481769"/>
<rect x="221.68" y="457.65" width="8.88" height="7.77" fill="#46307e"/>
<rect x="230.26" y="457.65" width="17.46" height="7.77" fill="#463480"/>
<rect x="247.42" y="457.65" width="437.94" height="7.77" fill="#443a83"/>
<rect x="685.06" y="457.65" width="171.93" height="7.77" fill="#3e4989"/>
<rect x="856.69" y="457.65" width="94.69" height="7.77" fill="#3a548c"/>
<rect x="951.08" y="457.65" width="51.79" height="7.77" fill="#365c8d"/>
<rect x="1002.57" y="457.65" width="68.95" height="7.77" fill="#33628d"/>
<rect x="1071.22" y="457.65" width="17.46" height="7.77" fill="#33638d"/>
<rect x="1088.38" y="457.65" width="120.44" height="7.77" fill="#2f6c8e"/>
<rect x="1208.52" y="457.65" width="146.18" height="7.77" fill="#2d718e"/>
<rect x="118.70" y="450.18" width="77.53" height="7.77" fill="#450457"/>
<rect x="195.93" y="450.18" width="26.04" height="7.77" fill="#481769"/>
<rect x="221.68" y="450.18" width="8.88" height="7.77" fill="#482173"/>
<rect x="230.26" y="450.18" width="17.46" height="7.77" fill="#482475"/>
<rect x="247.42" y="450.18" width="146.18" height="7.77" fill="#472a7a"/>
<rect x="393.30" y="450.18" width="292.06" height="7.77" fill="#482878"/>
<rect x="685.06" y="450.18" width="171.93" height="7.77" fill="#453781"/>
<rect x="856.69" y="450.18" width="94.69" height="7.77" fill="#433e85"/>
<rect x="951.08" y="450.18" width="51.79" height="7.77" fill="#414487"/>
<rect x="1002.57" y="450.18" width="68.95" height="7.77" fill="#3e4989"/>
<rect x="1071.22" y="450.18" width="17.46" height="7.77" fill="#3e4a89"/>
<rect x="1088.38" y="450.18" width="120.44" height="7.77" fill="#3a538b"/>
<rect x="1208.52" y="450.18" width="146.18" height="7.77" fill="#38588c"/>
<rect x="118.70" y="442.71" width="77.53" height="7.77" fill="#450457"/>
<rect x="195.93" y="442.71" width="17.46" height="7.77" fill="#460b5e"/>
<rect x="213.09" y="442.71" width="8.88" height="7.77" fill="#481769"/>
<rect x="221.68" y="442.71" width="8.88" height="7.77" fill="#482173"/>
<rect x="230.26" y="442.71" width="17.46" height="7.77" fill="#482475"/>
<rect x="247.42" y="442.71" width="146.18" height="7.77" fill="#472a7a"/>
<rect x="393.30" y="442.71" width="292.06" height="7.77" fill="#482475"/>
<rect x="685.06" y="442.71" width="171.93" height="7.77" fill="#453781"/>
<rect x="856.69" y="442.71" width="94.69" height="7.77" fill="#433e85"/>
<rect x="951.08" y="442.71" width="51.79" height="7.77" fill="#424086"/>
<rect x="1002.57" y="442.71" width="68.95" height="7.77" fill="#414287"/>
<rect x="1071.22" y="442.71" width="17.46" height="7.77" fill="#414487"/>
<rect x="1088.38" y="442.71" width="120.44" height="7.77" fill="#404688"/>
<rect x="1208.52" y="442.71" width="146.18" height="7.77" fill="#3e4989"/>
<rect x="118.70" y="435.24" width="77.53" height="7.77" fill="#450457"/>
<rect x="195.93" y="435.24" width="17.46" height="7.77" fill="#460b5e"/>
<rect x="213.09" y="435.24" width="8.88" height="7.77" fill="#481769"/>
<rect x="221.68" y="435.24" width="8.88" height="7.77" fill="#481a6c"/>
<rect x="230.26" y="435.24" width="17.46" height="7.77" fill="#482173"/>
<rect x="247.42" y="435.24" width="146.18" height="7.77" fill="#482475"/>
<rect x="393.30" y="435.24" width="292.06" height="7.77" fill="#482878"/>
<rect x="685.06" y="435.24" width="68.95" height="7.77" fill="#46307e"/>
<rect x="753.71" y="435.24" width="103.28" height="7.77" fill="#453781"/>
<rect x="856.69" y="435.24" width="94.69" height="7.77" fill="#443a83"/>
<rect x="951.08" y="435.24" width="51.79" height="7.77" fill="#424086"/>
<rect x="1002.57" y="435.24" width="68.95" height="7.77" fill="#414487"/>
<rect x="1071.22" y="435.24" width="17.46" height="7.77" fill="#404588"/>
<rect x="1088.38" y="435.24" width="120.44" height="7.77" fill="#3e4c8a"/>
<rect x="1208.52" y="435.24" width="146.18" height="7.77" fill="#3c4f8a"/>
<rect x="118.70" y="427.77" width="94.69" height="7.77" fill="#450457"/>
<rect x="213.09" y="427.77" width="34.62" height="7.77" fill="#450559"/>
<rect x="247.42" y="427.77" width="146.18" height="7.77" fill="#450457"/>
<rect x="393.30" y="427.77" width="292.06" height="7.77" fill="#450559"/>
<rect x="685.06" y="427.77" width="266.32" height="7.77" fill="#46085c"/>
<rect x="951.08" y="427.77" width="51.79" height="7.77" fill="#470d60"/>
<rect x="1002.57" y="427.77" width="86.11" height="7.77" fill="#471365"/>
<rect x="1088.38" y="427.77" width="120.44" height="7.77" fill="#481b6d"/>
<rect x="1208.52" y="427.77" width="146.18" height="7.77" fill="#481d6f"/>
<rect x="118.70" y="420.30" width="94.69" height="7.77" fill="#450457"/>
<rect x="213.09" y="420.30" width="8.88" height="7.77" fill="#450559"/>
<rect x="221.68" y="420.30" width="8.88" height="7.77" fill="#482071"/>
<rect x="230.26" y="420.30" width="17.46" height="7.77" fill="#482475"/>
<rect x="247.42" y="420.30" width="146.18" height="7.77" fill="#482173"/>
<rect x="393.30" y="420.30" width="292.06" height="7.77" fill="#482878"/>
<rect x="685.06" y="420.30" width="171.93" height="7.77" fill="#463480"/>
<rect x="856.69" y="420.30" width="94.69" height="7.77" fill="#453781"/>
<rect x="951.08" y="420.30" width="51.79" height="7.77" fill="#443983"/>
<rect x="1002.57" y="420.30" width="86.11" height="7.77" fill="#443a83"/>
<rect x="1088.38" y="420.30" width="120.44" height="7.77" fill="#46307e"/>
<rect x="1208.52" y="420.30" width="146.18" height="7.77" fill="#433e85"/>
<rect x="118.70" y="412.84" width="77.53" height="7.77" fill="#450457"/>
<rect x="195.93" y="412.84" width="17.46" height="7.77" fill="#471164"/>
<rect x="213.09" y="412.84" width="17.46" height="7.77" fill="#481769"/>
<rect x="230.26" y="412.84" width="17.46" height="7.77" fill="#481a6c"/>
<rect x="247.42" y="412.84" width="146.18" height="7.77" fill="#471365"/>
<rect x="393.30" y="412.84" width="292.06" height="7.77" fill="#481c6e"/>
<rect x="685.06" y="412.84" width="171.93" height="7.77" fill="#482475"/>
<rect x="856.69" y="412.84" width="94.69" height="7.77" fill="#472a7a"/>
<rect x="951.08" y="412.84" width="51.79" height="7.77" fill="#472e7c"/>
<rect x="1002.57" y="412.84" width="86.11" height="7.77" fill="#46307e"/>
<rect x="1088.38" y="412.84" width="120.44" height="7.77" fill="#482475"/>
<rect x="1208.52" y="412.84" width="146.18" height="7.77" fill="#453781"/>
<rect x="118.70" y="405.37" width="77.53" height="7.77" fill="#450457"/>
<rect x="195.93" y="405.37" width="17.46" height="7.77" fill="#471164"/>
<rect x="213.09" y="405.37" width="8.88" height="7.77" fill="#481769"/>
<rect x="221.68" y="405.37" width="8.88" height="7.77" fill="#481668"/>
<rect x="230.26" y="405.37" width="17.46" height="7.77" fill="#48186a"/>
<rect x="247.42" y="405.37" width="146.18" height="7.77" fill="#481668"/>
<rect x="393.30" y="405.37" width="292.06" height="7.77" fill="#481a6c"/>
<rect x="685.06" y="405.37" width="171.93" height="7.77" fill="#482475"/>
<rect x="856.69" y="405.37" width="231.99" height="7.77" fill="#472a7a"/>
<rect x="1088.38" y="405.37" width="120.44" height="7.77" fill="#482475"/>
<rect x="1208.52" y="405.37" width="146.18" height="7.77" fill="#472a7a"/>
<rect x="118.70" y="397.90" width="77.53" height="7.77" fill="#450457"/>
<rect x="195.93" y="397.90" width="17.46" height="7.77" fill="#471164"/>
<rect x="213.09" y="397.90" width="8.88" height="7.77" fill="#481769"/>
<rect x="221.68" y="397.90" width="8.88" height="7.77" fill="#471365"/>
<rect x="230.26" y="397.90" width="17.46" height="7.77" fill="#481467"/>
<rect x="247.42" y="397.90" width="146.18" height="7.77" fill="#460b5e"/>
<rect x="393.30" y="397.90" width="292.06" height="7.77" fill="#481769"/>
<rect x="685.06" y="397.90" width="317.81" height="7.77" fill="#482173"/>
<rect x="1002.57" y="397.90" width="206.25" height="7.77" fill="#482374"/>
<rect x="1208.52" y="397.90" width="146.18" height="7.77" fill="#482475"/>
<rect x="118.70" y="390.43" width="77.53" height="7.77" fill="#450457"/>
<rect x="195.93" y="390.43" width="17.46" height="7.77" fill="#481a6c"/>
<rect x="213.09" y="390.43" width="17.46" height="7.77" fill="#481769"/>
<rect x="230.26" y="390.43" width="17.46" height="7.77" fill="#481a6c"/>
<rect x="247.42" y="390.43" width="437.94" height="7.77" fill="#481c6e"/>
<rect x="685.06" y="390.43" width="266.32" height="7.77" fill="#482173"/>
<rect x="951.08" y="390.43" width="51.79" height="7.77" fill="#482576"/>
<rect x="1002.57" y="390.43" width="68.95" height="7.77" fill="#482878"/>
<rect x="1071.22" y="390.43" width="17.46" height="7.77" fill="#482979"/>
<rect x="1088.38" y="390.43" width="120.44" height="7.77" fill="#472f7d"/>
<rect x="1208.52" y="390.43" width="146.18" height="7.77" fill="#46307e"/>
<rect x="118.70" y="382.96" width="77.53" height="7.77" fill="#450457"/>
<rect x="195.93" y="382.96" width="17.46" height="7.77" fill="#481a6c"/>
<rect x="213.09" y="382.96" width="8.88" height="7.77" fill="#481769"/>
<rect x="221.68" y="382.96" width="26.04" height="7.77" fill="#46085c"/>
<rect x="247.42" y="382.96" width="146.18" height="7.77" fill="#471164"/>
<rect x="393.30" y="382.96" width="292.06" height="7.77" fill="#460a5d"/>
<rect x="685.06" y="382.96" width="266.32" height="7.77" fill="#470d60"/>
<rect x="951.08" y="382.96" width="51.79" height="7.77" fill="#471063"/>
<rect x="1002.57" y="382.96" width="68.95" height="7.77" fill="#471164"/>
<rect x="1071.22" y="382.96" width="17.46" height="7.77" fill="#471365"/>
<rect x="1088.38" y="382.96" width="120.44" height="7.77" fill="#481668"/>
<rect x="1208.52" y="382.96" width="146.18" height="7.77" fill="#481769"/>
<rect x="118.70" y="375.49" width="94.69" height="7.77" fill="#450457"/>
<rect x="213.09" y="375.49" width="8.88" height="7.77" fill="#450559"/>
<rect x="221.68" y="375.49" width="8.88" height="7.77" fill="#460b5e"/>
<rect x="230.26" y="375.49" width="17.46" height="7.77" fill="#470d60"/>
<rect x="247.42" y="375.49" width="146.18" height="7.77" fill="#460b5e"/>
<rect x="393.30" y="375.49" width="292.06" height="7.77" fill="#470d60"/>
<rect x="685.06" y="375.49" width="266.32" height="7.77" fill="#481769"/>
<rect x="951.08" y="375.49" width="51.79" height="7.77" fill="#481a6c"/>
<rect x="1002.57" y="375.49" width="68.95" height="7.77" fill="#481c6e"/>
<rect x="1071.22" y="375.49" width="17.46" height="7.77" fill="#481d6f"/>
<rect x="1088.38" y="375.49" width="120.44" height="7.77" fill="#482173"/>
<rect x="1208.52" y="375.49" width="146.18" height="7.77" fill="#482475"/>
<rect x="118.70" y="368.03" width="94.69" height="7.77" fill="#450457"/>
<rect x="213.09" y="368.03" width="8.88" height="7.77" fill="#450559"/>
<rect x="221.68" y="368.03" width="8.88" height="7.77" fill="#470e61"/>
<rect x="230.26" y="368.03" width="17.46" height="7.77" fill="#471063"/>
<rect x="247.42" y="368.03" width="437.94" height="7.77" fill="#471164"/>
<rect x="685.06" y="368.03" width="669.64" height="7.77" fill="#471365"/>
<rect x="118.70" y="360.56" width="94.69" height="7.77" fill="#450457"/>
<rect x="213.09" y="360.56" width="8.88" height="7.77" fill="#450559"/>
<rect x="221.68" y="360.56" width="8.88" height="7.77" fill="#471063"/>
<rect x="230.26" y="360.56" width="17.46" height="7.77" fill="#471164"/>
<rect x="247.42" y="360.56" width="146.18" height="7.77" fill="#471063"/>
<rect x="393.30" y="360.56" width="961.40" height="7.77" fill="#471365"/>
<rect x="118.70" y="353.09" width="94.69" height="7.77" fill="#450457"/>
<rect x="213.09" y="353.09" width="8.88" height="7.77" fill="#450559"/>
<rect x="221.68" y="353.09" width="729.71" height="7.77" fill="#450457"/>
<rect x="951.08" y="353.09" width="51.79" height="7.77" fill="#46075a"/>
<rect x="1002.57" y="353.09" width="86.11" height="7.77" fill="#460a5d"/>
<rect x="1088.38" y="353.09" width="120.44" height="7.77" fill="#470e61"/>
<rect x="1208.52" y="353.09" width="146.18" height="7.77" fill="#471063"/>
<rect x="118.70" y="345.62" width="94.69" height="7.77" fill="#450457"/>
<rect x="213.09" y="345.62" width="8.88" height="7.77" fill="#450559"/>
<rect x="221.68" y="345.62" width="26.04" height="7.77" fill="#46075a"/>
<rect x="247.42" y="345.62" width="146.18" height="7.77" fill="#450457"/>
<rect x="393.30" y="345.62" width="292.06" height="7.77" fill="#46085c"/>
<rect x="685.06" y="345.62" width="403.62" height="7.77" fill="#471063"/>
<rect x="1088.38" y="345.62" width="120.44" height="7.77" fill="#470e61"/>
<rect x="1208.52" y="345.62" width="146.18" height="7.77" fill="#471063"/>
<rect x="118.70" y="338.15" width="94.69" height="7.77" fill="#450457"/>
<rect x="213.09" y="338.15" width="8.88" height="7.77" fill="#450559"/>
<rect x="221.68" y="338.15" width="729.71" height="7.77" fill="#450457"/>
<rect x="951.08" y="338.15" width="137.60" height="7.77" fill="#450559"/>
<rect x="1088.38" y="338.15" width="120.44" height="7.77" fill="#46075a"/>
<rect x="1208.52" y="338.15" width="146.18" height="7.77" fill="#46085c"/>
<rect x="118.70" y="330.68" width="94.69" height="7.77" fill="#450457"/>
<rect x="213.09" y="330.68" width="8.88" height="7.77" fill="#450559"/>
<rect x="221.68" y="330.68" width="1133.03" height="7.77" fill="#450457"/>
<rect x="118.70" y="323.22" width="94.69" height="7.77" fill="#450457"/>
<rect x="213.09" y="323.22" width="8.88" height="7.77" fill="#450559"/>
<rect x="221.68" y="323.22" width="26.04" height="7.77" fill="#46085c"/>
<rect x="247.42" y="323.22" width="146.18" height="7.77" fill="#450457"/>
<rect x="393.30" y="323.22" width="292.06" height="7.77" fill="#460a5d"/>
<rect x="685.06" y="323.22" width="266.32" height="7.77" fill="#471063"/>
<rect x="951.08" y="323.22" width="51.79" height="7.77" fill="#471365"/>
<rect x="1002.57" y="323.22" width="68.95" height="7.77" fill="#481668"/>
<rect x="1071.22" y="323.22" width="17.46" height="7.77" fill="#481769"/>
<rect x="1088.38" y="323.22" width="120.44" height="7.77" fill="#481c6e"/>
<rect x="1208.52" y="323.22" width="146.18" height="7.77" fill="#481d6f"/>
<rect x="118.70" y="315.75" width="94.69" height="7.77" fill="#450457"/>
<rect x="213.09" y="315.75" width="8.88" height="7.77" fill="#450559"/>
<rect x="221.68" y="315.75" width="729.71" height="7.77" fill="#450457"/>
<rect x="951.08" y="315.75" width="137.60" height="7.77" fill="#450559"/>
<rect x="1088.38" y="315.75" width="120.44" height="7.77" fill="#46075a"/>
<rect x="1208.52" y="315.75" width="146.18" height="7.77" fill="#46085c"/>
<rect x="118.70" y="308.28" width="94.69" height="7.77" fill="#450457"/>
<rect x="213.09" y="308.28" width="8.88" height="7.77" fill="#450559"/>
<rect x="221.68" y="308.28" width="729.71" height="7.77" fill="#450457"/>
<rect x="951.08" y="308.28" width="137.60" height="7.77" fill="#450559"/>
<rect x="1088.38" y="308.28" width="120.44" height="7.77" fill="#46075a"/>
<rect x="1208.52" y="308.28" width="146.18" height="7.77" fill="#46085c"/>
<rect x="118.70" y="300.81" width="94.69" height="7.77" fill="#450457"/>
<rect x="213.09" y="300.81" width="8.88" height="7.77" fill="#450559"/>
<rect x="221.68" y="300.81" width="729.71" height="7.77" fill="#450457"/>
<rect x="951.08" y="300.81" width="137.60" height="7.77" fill="#450559"/>
<rect x="1088.38" y="300.81" width="120.44" height="7.77" fill="#46075a"/>
<rect x="1208.52" y="300.81" width="146.18" height="7.77" fill="#46085c"/>
<rect x="118.70" y="293.34" width="94.69" height="7.77" fill="#450457"/>
<rect x="213.09" y="293.34" width="8.88" height="7.77" fill="#450559"/>
<rect x="221.68" y="293.34" width="729.71" height="7.77" fill="#450457"/>
<rect x="951.08" y="293.34" width="137.60" height="7.77" fill="#450559"/>
<rect x="1088.38" y="293.34" width="120.44" height="7.77" fill="#46075a"/>
<rect x="1208.52" y="293.34" width="146.18" height="7.77" fill="#46085c"/>
<rect x="118.70" y="285.87" width="94.69" height="7.77" fill="#450457"/>
<rect x="213.09" y="285.87" width="8.88" height="7.77" fill="#450559"/>
<rect x="221.68" y="285.87" width="729.71" height="7.77" fill="#450457"/>
<rect x="951.08" y="285.87" width="137.60" height="7.77" fill="#450559"/>
<rect x="1088.38" y="285.87" width="120.44" height="7.77" fill="#46075a"/>
<rect x="1208.52" y="285.87" width="146.18" height="7.77" fill="#46085c"/>
<rect x="118.70" y="278.41" width="94.69" height="7.77" fill="#450457"/>
<rect x="213.09" y="278.41" width="8.88" height="7.77" fill="#450559"/>
<rect x="221.68" y="278.41" width="729.71" height="7.77" fill="#450457"/>
<rect x="951.08" y="278.41" width="137.60" height="7.77" fill="#440256"/>
<rect x="1088.38" y="278.41" width="266.32" height="7.77" fill="#440154"/>
<rect x="118.70" y="270.94" width="94.69" height="7.77" fill="#450457"/>
<rect x="213.09" y="270.94" width="34.62" height="7.77" fill="#450559"/>
<rect x="247.42" y="270.94" width="146.18" height="7.77" fill="#450457"/>
<rect x="393.30" y="270.94" width="292.06" height="7.77" fill="#450559"/>
<rect x="685.06" y="270.94" width="317.81" height="7.77" fill="#46085c"/>
<rect x="1002.57" y="270.94" width="86.11" height="7.77" fill="#460a5d"/>
<rect x="1088.38" y="270.94" width="266.32" height="7.77" fill="#460b5e"/>
<rect x="118.70" y="263.47" width="94.69" height="7.77" fill="#450457"/>
<rect x="213.09" y="263.47" width="34.62" height="7.77" fill="#450559"/>
<rect x="247.42" y="263.47" width="146.18" height="7.77" fill="#450457"/>
<rect x="393.30" y="263.47" width="292.06" height="7.77" fill="#450559"/>
<rect x="685.06" y="263.47" width="266.32" height="7.77" fill="#450457"/>
<rect x="951.08" y="263.47" width="137.60" height="7.77" fill="#450559"/>
<rect x="1088.38" y="263.47" width="120.44" height="7.77" fill="#46075a"/>
<rect x="1208.52" y="263.47" width="146.18" height="7.77" fill="#46085c"/>
<rect x="118.70" y="256.00" width="94.69" height="7.77" fill="#450457"/>
<rect x="213.09" y="256.00" width="8.88" height="7.77" fill="#450559"/>
<rect x="221.68" y="256.00" width="171.93" height="7.77" fill="#450457"/>
<rect x="393.30" y="256.00" width="558.08" height="7.77" fill="#450559"/>
<rect x="951.08" y="256.00" width="257.74" height="7.77" fill="#46075a"/>
<rect x="1208.52" y="256.00" width="146.18" height="7.77" fill="#46085c"/>
</g>
<g stroke="rgba(255,255,255,0.065)" stroke-width="1" stroke-dasharray="7 1" shape-rendering="crispEdges">
<line x1="127.3" y1="256.0" x2="127.3" y2="846.0"/>
<line x1="153.0" y1="256.0" x2="153.0" y2="846.0"/>
<line x1="170.2" y1="256.0" x2="170.2" y2="846.0"/>
<line x1="187.4" y1="256.0" x2="187.4" y2="846.0"/>
<line x1="213.1" y1="256.0" x2="213.1" y2="846.0"/>
<line x1="230.3" y1="256.0" x2="230.3" y2="846.0"/>
<line x1="247.4" y1="256.0" x2="247.4" y2="846.0"/>
<line x1="273.2" y1="256.0" x2="273.2" y2="846.0"/>
<line x1="290.3" y1="256.0" x2="290.3" y2="846.0"/>
<line x1="316.1" y1="256.0" x2="316.1" y2="846.0"/>
<line x1="333.2" y1="256.0" x2="333.2" y2="846.0"/>
<line x1="350.4" y1="256.0" x2="350.4" y2="846.0"/>
<line x1="376.1" y1="256.0" x2="376.1" y2="846.0"/>
<line x1="393.3" y1="256.0" x2="393.3" y2="846.0"/>
<line x1="410.5" y1="256.0" x2="410.5" y2="846.0"/>
<line x1="436.2" y1="256.0" x2="436.2" y2="846.0"/>
<line x1="453.4" y1="256.0" x2="453.4" y2="846.0"/>
<line x1="479.1" y1="256.0" x2="479.1" y2="846.0"/>
<line x1="496.3" y1="256.0" x2="496.3" y2="846.0"/>
<line x1="513.4" y1="256.0" x2="513.4" y2="846.0"/>
<line x1="539.2" y1="256.0" x2="539.2" y2="846.0"/>
<line x1="556.3" y1="256.0" x2="556.3" y2="846.0"/>
<line x1="573.5" y1="256.0" x2="573.5" y2="846.0"/>
<line x1="599.3" y1="256.0" x2="599.3" y2="846.0"/>
<line x1="616.4" y1="256.0" x2="616.4" y2="846.0"/>
<line x1="633.6" y1="256.0" x2="633.6" y2="846.0"/>
<line x1="659.3" y1="256.0" x2="659.3" y2="846.0"/>
<line x1="676.5" y1="256.0" x2="676.5" y2="846.0"/>
<line x1="702.2" y1="256.0" x2="702.2" y2="846.0"/>
<line x1="719.4" y1="256.0" x2="719.4" y2="846.0"/>
<line x1="736.6" y1="256.0" x2="736.6" y2="846.0"/>
<line x1="762.3" y1="256.0" x2="762.3" y2="846.0"/>
<line x1="779.5" y1="256.0" x2="779.5" y2="846.0"/>
<line x1="796.6" y1="256.0" x2="796.6" y2="846.0"/>
<line x1="822.4" y1="256.0" x2="822.4" y2="846.0"/>
<line x1="839.5" y1="256.0" x2="839.5" y2="846.0"/>
<line x1="865.3" y1="256.0" x2="865.3" y2="846.0"/>
<line x1="882.4" y1="256.0" x2="882.4" y2="846.0"/>
<line x1="899.6" y1="256.0" x2="899.6" y2="846.0"/>
<line x1="925.3" y1="256.0" x2="925.3" y2="846.0"/>
<line x1="942.5" y1="256.0" x2="942.5" y2="846.0"/>
<line x1="959.7" y1="256.0" x2="959.7" y2="846.0"/>
<line x1="985.4" y1="256.0" x2="985.4" y2="846.0"/>
<line x1="1002.6" y1="256.0" x2="1002.6" y2="846.0"/>
<line x1="1028.3" y1="256.0" x2="1028.3" y2="846.0"/>
<line x1="1045.5" y1="256.0" x2="1045.5" y2="846.0"/>
<line x1="1062.6" y1="256.0" x2="1062.6" y2="846.0"/>
<line x1="1088.4" y1="256.0" x2="1088.4" y2="846.0"/>
<line x1="1105.5" y1="256.0" x2="1105.5" y2="846.0"/>
<line x1="1122.7" y1="256.0" x2="1122.7" y2="846.0"/>
<line x1="1148.5" y1="256.0" x2="1148.5" y2="846.0"/>
<line x1="1165.6" y1="256.0" x2="1165.6" y2="846.0"/>
<line x1="1191.4" y1="256.0" x2="1191.4" y2="846.0"/>
<line x1="1208.5" y1="256.0" x2="1208.5" y2="846.0"/>
<line x1="1225.7" y1="256.0" x2="1225.7" y2="846.0"/>
<line x1="1251.4" y1="256.0" x2="1251.4" y2="846.0"/>
<line x1="1268.6" y1="256.0" x2="1268.6" y2="846.0"/>
<line x1="1285.8" y1="256.0" x2="1285.8" y2="846.0"/>
<line x1="1311.5" y1="256.0" x2="1311.5" y2="846.0"/>
<line x1="1328.7" y1="256.0" x2="1328.7" y2="846.0"/>
<line x1="118.7" y1="263.5" x2="1354.4" y2="263.5"/>
<line x1="118.7" y1="278.4" x2="1354.4" y2="278.4"/>
<line x1="118.7" y1="293.3" x2="1354.4" y2="293.3"/>
<line x1="118.7" y1="308.3" x2="1354.4" y2="308.3"/>
<line x1="118.7" y1="323.2" x2="1354.4" y2="323.2"/>
<line x1="118.7" y1="338.2" x2="1354.4" y2="338.2"/>
<line x1="118.7" y1="353.1" x2="1354.4" y2="353.1"/>
<line x1="118.7" y1="368.0" x2="1354.4" y2="368.0"/>
<line x1="118.7" y1="383.0" x2="1354.4" y2="383.0"/>
<line x1="118.7" y1="397.9" x2="1354.4" y2="397.9"/>
<line x1="118.7" y1="412.8" x2="1354.4" y2="412.8"/>
<line x1="118.7" y1="427.8" x2="1354.4" y2="427.8"/>
<line x1="118.7" y1="442.7" x2="1354.4" y2="442.7"/>
<line x1="118.7" y1="457.6" x2="1354.4" y2="457.6"/>
<line x1="118.7" y1="472.6" x2="1354.4" y2="472.6"/>
<line x1="118.7" y1="487.5" x2="1354.4" y2="487.5"/>
<line x1="118.7" y1="502.5" x2="1354.4" y2="502.5"/>
<line x1="118.7" y1="517.4" x2="1354.4" y2="517.4"/>
<line x1="118.7" y1="532.3" x2="1354.4" y2="532.3"/>
<line x1="118.7" y1="547.3" x2="1354.4" y2="547.3"/>
<line x1="118.7" y1="562.2" x2="1354.4" y2="562.2"/>
<line x1="118.7" y1="577.1" x2="1354.4" y2="577.1"/>
<line x1="118.7" y1="592.1" x2="1354.4" y2="592.1"/>
<line x1="118.7" y1="607.0" x2="1354.4" y2="607.0"/>
<line x1="118.7" y1="621.9" x2="1354.4" y2="621.9"/>
<line x1="118.7" y1="636.9" x2="1354.4" y2="636.9"/>
<line x1="118.7" y1="651.8" x2="1354.4" y2="651.8"/>
<line x1="118.7" y1="666.8" x2="1354.4" y2="666.8"/>
<line x1="118.7" y1="681.7" x2="1354.4" y2="681.7"/>
<line x1="118.7" y1="696.6" x2="1354.4" y2="696.6"/>
<line x1="118.7" y1="711.6" x2="1354.4" y2="711.6"/>
<line x1="118.7" y1="726.5" x2="1354.4" y2="726.5"/>
<line x1="118.7" y1="741.4" x2="1354.4" y2="741.4"/>
<line x1="118.7" y1="756.4" x2="1354.4" y2="756.4"/>
<line x1="118.7" y1="771.3" x2="1354.4" y2="771.3"/>
<line x1="118.7" y1="786.3" x2="1354.4" y2="786.3"/>
<line x1="118.7" y1="801.2" x2="1354.4" y2="801.2"/>
<line x1="118.7" y1="816.1" x2="1354.4" y2="816.1"/>
<line x1="118.7" y1="831.1" x2="1354.4" y2="831.1"/>
</g>
<g>
<rect x="122.4" y="497.1" width="1.1" height="20.5" fill="#f6465d"/>
<rect x="120.5" y="500.2" width="5" height="16.3" fill="#f6465d"/>
<rect x="131.0" y="512.9" width="1.1" height="7.7" fill="#f6465d"/>
<rect x="129.1" y="515.5" width="5" height="1.7" fill="#f6465d"/>
<rect x="139.6" y="514.9" width="1.1" height="6.7" fill="#f6465d"/>
<rect x="137.7" y="516.5" width="5" height="2.5" fill="#f6465d"/>
<rect x="148.2" y="517.6" width="1.1" height="10.8" fill="#f6465d"/>
<rect x="146.2" y="518.2" width="5" height="4.5" fill="#f6465d"/>
<rect x="156.8" y="521.0" width="1.1" height="18.0" fill="#f6465d"/>
<rect x="154.8" y="521.7" width="5" height="15.7" fill="#f6465d"/>
<rect x="165.3" y="530.4" width="1.1" height="51.9" fill="#f6465d"/>
<rect x="163.4" y="535.9" width="5" height="37.8" fill="#f6465d"/>
<rect x="173.9" y="570.3" width="1.1" height="44.3" fill="#f6465d"/>
<rect x="172.0" y="572.7" width="5" height="22.5" fill="#f6465d"/>
<rect x="182.5" y="573.7" width="1.1" height="22.5" fill="#0ecb81"/>
<rect x="180.6" y="576.8" width="5" height="18.4" fill="#0ecb81"/>
<rect x="191.1" y="576.8" width="1.1" height="31.2" fill="#f6465d"/>
<rect x="189.1" y="576.8" width="5" height="21.4" fill="#f6465d"/>
<rect x="199.7" y="588.0" width="1.1" height="26.2" fill="#f6465d"/>
<rect x="197.7" y="597.2" width="5" height="16.3" fill="#f6465d"/>
<rect x="208.3" y="595.0" width="1.1" height="18.5" fill="#0ecb81"/>
<rect x="206.3" y="606.0" width="5" height="7.0" fill="#0ecb81"/>
<rect x="216.8" y="599.3" width="1.1" height="9.5" fill="#f6465d"/>
<rect x="214.9" y="606.0" width="5" height="2.8" fill="#f6465d"/>
<rect x="225.4" y="605.4" width="1.1" height="21.8" fill="#f6465d"/>
<rect x="223.5" y="607.4" width="5" height="17.8" fill="#f6465d"/>
<rect x="234.0" y="608.0" width="1.1" height="17.8" fill="#0ecb81"/>
<rect x="232.0" y="613.5" width="5" height="10.7" fill="#0ecb81"/>
<rect x="242.6" y="591.7" width="1.1" height="25.3" fill="#0ecb81"/>
<rect x="240.6" y="593.1" width="5" height="21.9" fill="#0ecb81"/>
<rect x="251.2" y="582.9" width="1.1" height="19.8" fill="#0ecb81"/>
<rect x="249.2" y="583.9" width="5" height="10.6" fill="#0ecb81"/>
<rect x="259.7" y="579.9" width="1.1" height="12.2" fill="#f6465d"/>
<rect x="257.8" y="582.9" width="5" height="3.1" fill="#f6465d"/>
<rect x="268.3" y="581.3" width="1.1" height="13.9" fill="#f6465d"/>
<rect x="266.4" y="585.0" width="5" height="5.0" fill="#f6465d"/>
<rect x="276.9" y="586.4" width="1.1" height="10.2" fill="#f6465d"/>
<rect x="275.0" y="589.0" width="5" height="7.2" fill="#f6465d"/>
<rect x="285.5" y="589.0" width="1.1" height="12.3" fill="#f6465d"/>
<rect x="283.5" y="594.5" width="5" height="2.1" fill="#f6465d"/>
<rect x="294.1" y="590.0" width="1.1" height="7.2" fill="#0ecb81"/>
<rect x="292.1" y="594.1" width="5" height="2.5" fill="#0ecb81"/>
<rect x="302.6" y="586.0" width="1.1" height="9.8" fill="#0ecb81"/>
<rect x="300.7" y="592.5" width="5" height="2.0" fill="#0ecb81"/>
<rect x="311.2" y="585.0" width="1.1" height="9.1" fill="#0ecb81"/>
<rect x="309.3" y="590.0" width="5" height="3.1" fill="#0ecb81"/>
<rect x="319.8" y="579.9" width="1.1" height="11.1" fill="#0ecb81"/>
<rect x="317.9" y="586.0" width="5" height="4.5" fill="#0ecb81"/>
<rect x="328.4" y="584.0" width="1.1" height="8.1" fill="#0ecb81"/>
<rect x="326.4" y="584.3" width="5" height="1.7" fill="#0ecb81"/>
<rect x="337.0" y="574.7" width="1.1" height="10.9" fill="#0ecb81"/>
<rect x="335.0" y="575.4" width="5" height="9.6" fill="#0ecb81"/>
<rect x="345.6" y="573.3" width="1.1" height="6.6" fill="#0ecb81"/>
<rect x="343.6" y="576.2" width="5" height="1.6" fill="#0ecb81"/>
<rect x="354.1" y="567.6" width="1.1" height="12.3" fill="#0ecb81"/>
<rect x="352.2" y="568.6" width="5" height="8.2" fill="#0ecb81"/>
<rect x="362.7" y="549.2" width="1.1" height="20.0" fill="#0ecb81"/>
<rect x="360.8" y="564.5" width="5" height="4.1" fill="#0ecb81"/>
<rect x="371.3" y="563.5" width="1.1" height="10.2" fill="#f6465d"/>
<rect x="369.3" y="564.5" width="5" height="7.2" fill="#f6465d"/>
<rect x="379.9" y="561.0" width="1.1" height="11.1" fill="#0ecb81"/>
<rect x="377.9" y="561.9" width="5" height="9.8" fill="#0ecb81"/>
<rect x="388.5" y="552.3" width="1.1" height="11.2" fill="#0ecb81"/>
<rect x="386.5" y="554.9" width="5" height="8.0" fill="#0ecb81"/>
<rect x="397.0" y="551.3" width="1.1" height="7.1" fill="#0ecb81"/>
<rect x="395.1" y="554.3" width="5" height="1.6" fill="#0ecb81"/>
<rect x="405.6" y="539.0" width="1.1" height="16.3" fill="#0ecb81"/>
<rect x="403.7" y="544.1" width="5" height="10.2" fill="#0ecb81"/>
<rect x="414.2" y="544.1" width="1.1" height="12.7" fill="#f6465d"/>
<rect x="412.3" y="544.1" width="5" height="12.7" fill="#f6465d"/>
<rect x="422.8" y="549.6" width="1.1" height="8.8" fill="#0ecb81"/>
<rect x="420.8" y="551.0" width="5" height="6.2" fill="#0ecb81"/>
<rect x="431.4" y="546.0" width="1.1" height="10.8" fill="#f6465d"/>
<rect x="429.4" y="551.0" width="5" height="1.7" fill="#f6465d"/>
<rect x="439.9" y="551.0" width="1.1" height="7.8" fill="#0ecb81"/>
<rect x="438.0" y="551.0" width="5" height="1.7" fill="#0ecb81"/>
<rect x="448.5" y="548.2" width="1.1" height="12.6" fill="#f6465d"/>
<rect x="446.6" y="551.0" width="5" height="6.2" fill="#f6465d"/>
<rect x="457.1" y="552.3" width="1.1" height="6.9" fill="#0ecb81"/>
<rect x="455.2" y="553.7" width="5" height="3.1" fill="#0ecb81"/>
<rect x="465.7" y="550.6" width="1.1" height="5.1" fill="#f6465d"/>
<rect x="463.7" y="553.7" width="5" height="2.0" fill="#f6465d"/>
<rect x="474.3" y="553.1" width="1.1" height="10.8" fill="#f6465d"/>
<rect x="472.3" y="554.7" width="5" height="8.2" fill="#f6465d"/>
<rect x="482.9" y="557.8" width="1.1" height="6.1" fill="#f6465d"/>
<rect x="480.9" y="560.8" width="5" height="2.1" fill="#f6465d"/>
<rect x="491.4" y="559.2" width="1.1" height="5.3" fill="#f6465d"/>
<rect x="489.5" y="561.2" width="5" height="2.7" fill="#f6465d"/>
<rect x="500.0" y="562.9" width="1.1" height="9.2" fill="#f6465d"/>
<rect x="498.1" y="562.9" width="5" height="7.1" fill="#f6465d"/>
<rect x="508.6" y="566.0" width="1.1" height="9.5" fill="#f6465d"/>
<rect x="506.6" y="569.0" width="5" height="2.0" fill="#f6465d"/>
<rect x="517.2" y="564.5" width="1.1" height="9.0" fill="#f6465d"/>
<rect x="515.2" y="570.6" width="5" height="2.1" fill="#f6465d"/>
<rect x="525.8" y="571.0" width="1.1" height="7.2" fill="#f6465d"/>
<rect x="523.8" y="571.0" width="5" height="6.2" fill="#f6465d"/>
<rect x="534.3" y="573.5" width="1.1" height="10.8" fill="#f6465d"/>
<rect x="532.4" y="575.5" width="5" height="7.4" fill="#f6465d"/>
<rect x="542.9" y="577.2" width="1.1" height="7.8" fill="#0ecb81"/>
<rect x="541.0" y="579.6" width="5" height="2.1" fill="#0ecb81"/>
<rect x="551.5" y="575.1" width="1.1" height="7.2" fill="#0ecb81"/>
<rect x="549.6" y="575.1" width="5" height="5.8" fill="#0ecb81"/>
<rect x="560.1" y="564.5" width="1.1" height="13.1" fill="#0ecb81"/>
<rect x="558.1" y="574.7" width="5" height="2.1" fill="#0ecb81"/>
<rect x="568.7" y="567.4" width="1.1" height="14.3" fill="#f6465d"/>
<rect x="566.7" y="574.7" width="5" height="5.5" fill="#f6465d"/>
<rect x="577.2" y="576.2" width="1.1" height="7.1" fill="#f6465d"/>
<rect x="575.3" y="579.2" width="5" height="3.7" fill="#f6465d"/>
<rect x="585.8" y="575.5" width="1.1" height="7.4" fill="#0ecb81"/>
<rect x="583.9" y="578.8" width="5" height="3.5" fill="#0ecb81"/>
<rect x="594.4" y="573.5" width="1.1" height="7.8" fill="#0ecb81"/>
<rect x="592.5" y="574.1" width="5" height="6.1" fill="#0ecb81"/>
<rect x="603.0" y="570.6" width="1.1" height="10.3" fill="#0ecb81"/>
<rect x="601.0" y="571.0" width="5" height="4.1" fill="#0ecb81"/>
<rect x="611.6" y="563.9" width="1.1" height="8.8" fill="#0ecb81"/>
<rect x="609.6" y="568.0" width="5" height="4.1" fill="#0ecb81"/>
<rect x="620.2" y="568.0" width="1.1" height="9.2" fill="#f6465d"/>
<rect x="618.2" y="568.0" width="5" height="6.1" fill="#f6465d"/>
<rect x="628.7" y="569.0" width="1.1" height="10.2" fill="#f6465d"/>
<rect x="626.8" y="573.1" width="5" height="5.1" fill="#f6465d"/>
<rect x="637.3" y="573.1" width="1.1" height="5.1" fill="#0ecb81"/>
<rect x="635.4" y="573.5" width="5" height="4.1" fill="#0ecb81"/>
<rect x="645.9" y="572.7" width="1.1" height="17.8" fill="#f6465d"/>
<rect x="643.9" y="573.5" width="5" height="13.9" fill="#f6465d"/>
<rect x="654.5" y="584.3" width="1.1" height="10.2" fill="#f6465d"/>
<rect x="652.5" y="585.8" width="5" height="8.1" fill="#f6465d"/>
<rect x="663.1" y="589.4" width="1.1" height="8.2" fill="#0ecb81"/>
<rect x="661.1" y="592.5" width="5" height="1.6" fill="#0ecb81"/>
<rect x="671.6" y="588.4" width="1.1" height="15.7" fill="#f6465d"/>
<rect x="669.7" y="592.5" width="5" height="9.6" fill="#f6465d"/>
<rect x="680.2" y="595.6" width="1.1" height="7.7" fill="#0ecb81"/>
<rect x="678.3" y="597.6" width="5" height="5.1" fill="#0ecb81"/>
<rect x="688.8" y="587.4" width="1.1" height="11.8" fill="#0ecb81"/>
<rect x="686.9" y="596.6" width="5" height="2.0" fill="#0ecb81"/>
<rect x="697.4" y="594.5" width="1.1" height="6.2" fill="#f6465d"/>
<rect x="695.4" y="596.6" width="5" height="2.0" fill="#f6465d"/>
<rect x="706.0" y="597.2" width="1.1" height="10.8" fill="#f6465d"/>
<rect x="704.0" y="597.2" width="5" height="9.4" fill="#f6465d"/>
<rect x="714.5" y="601.9" width="1.1" height="10.2" fill="#0ecb81"/>
<rect x="712.6" y="603.3" width="5" height="1.6" fill="#0ecb81"/>
<rect x="723.1" y="603.3" width="1.1" height="17.6" fill="#f6465d"/>
<rect x="721.2" y="603.3" width="5" height="13.9" fill="#f6465d"/>
<rect x="731.7" y="607.0" width="1.1" height="21.4" fill="#0ecb81"/>
<rect x="729.8" y="608.0" width="5" height="9.2" fill="#0ecb81"/>
<rect x="740.3" y="590.2" width="1.1" height="21.9" fill="#0ecb81"/>
<rect x="738.3" y="593.7" width="5" height="15.3" fill="#0ecb81"/>
<rect x="748.9" y="589.0" width="1.1" height="17.0" fill="#f6465d"/>
<rect x="746.9" y="593.7" width="5" height="11.6" fill="#f6465d"/>
<rect x="757.5" y="599.8" width="1.1" height="6.8" fill="#0ecb81"/>
<rect x="755.5" y="603.9" width="5" height="1.6" fill="#0ecb81"/>
<rect x="766.0" y="601.9" width="1.1" height="29.6" fill="#f6465d"/>
<rect x="764.1" y="603.9" width="5" height="9.6" fill="#f6465d"/>
<rect x="774.6" y="595.7" width="1.1" height="24.5" fill="#0ecb81"/>
<rect x="772.7" y="608.6" width="5" height="4.9" fill="#0ecb81"/>
<rect x="783.2" y="607.4" width="1.1" height="10.8" fill="#f6465d"/>
<rect x="781.2" y="608.0" width="5" height="1.6" fill="#f6465d"/>
<rect x="791.8" y="599.8" width="1.1" height="17.0" fill="#0ecb81"/>
<rect x="789.8" y="600.4" width="5" height="9.0" fill="#0ecb81"/>
<rect x="800.4" y="595.1" width="1.1" height="9.8" fill="#f6465d"/>
<rect x="798.4" y="599.8" width="5" height="3.5" fill="#f6465d"/>
<rect x="808.9" y="598.8" width="1.1" height="6.5" fill="#0ecb81"/>
<rect x="807.0" y="599.8" width="5" height="3.1" fill="#0ecb81"/>
<rect x="817.5" y="597.2" width="1.1" height="10.2" fill="#f6465d"/>
<rect x="815.6" y="598.4" width="5" height="7.5" fill="#f6465d"/>
<rect x="826.1" y="598.8" width="1.1" height="7.2" fill="#0ecb81"/>
<rect x="824.2" y="599.8" width="5" height="5.5" fill="#0ecb81"/>
<rect x="834.7" y="597.8" width="1.1" height="6.1" fill="#0ecb81"/>
<rect x="832.7" y="598.4" width="5" height="2.8" fill="#0ecb81"/>
<rect x="843.3" y="597.2" width="1.1" height="11.8" fill="#f6465d"/>
<rect x="841.3" y="597.8" width="5" height="9.6" fill="#f6465d"/>
<rect x="851.8" y="600.4" width="1.1" height="6.6" fill="#0ecb81"/>
<rect x="849.9" y="600.8" width="5" height="5.8" fill="#0ecb81"/>
<rect x="860.4" y="600.8" width="1.1" height="12.7" fill="#f6465d"/>
<rect x="858.5" y="600.8" width="5" height="5.8" fill="#f6465d"/>
<rect x="869.0" y="600.8" width="1.1" height="7.2" fill="#0ecb81"/>
<rect x="867.1" y="602.5" width="5" height="4.1" fill="#0ecb81"/>
<rect x="877.6" y="599.2" width="1.1" height="11.4" fill="#f6465d"/>
<rect x="875.6" y="602.5" width="5" height="2.8" fill="#f6465d"/>
<rect x="886.2" y="603.9" width="1.1" height="12.3" fill="#f6465d"/>
<rect x="884.2" y="604.5" width="5" height="11.0" fill="#f6465d"/>
<rect x="894.8" y="614.7" width="1.1" height="14.7" fill="#f6465d"/>
<rect x="892.8" y="614.7" width="5" height="2.1" fill="#f6465d"/>
<rect x="903.3" y="604.9" width="1.1" height="15.3" fill="#0ecb81"/>
<rect x="901.4" y="612.7" width="5" height="4.9" fill="#0ecb81"/>
<rect x="911.9" y="603.9" width="1.1" height="9.6" fill="#0ecb81"/>
<rect x="910.0" y="610.0" width="5" height="3.1" fill="#0ecb81"/>
<rect x="920.5" y="597.8" width="1.1" height="13.2" fill="#0ecb81"/>
<rect x="918.5" y="598.4" width="5" height="12.2" fill="#0ecb81"/>
<rect x="929.1" y="598.8" width="1.1" height="8.2" fill="#f6465d"/>
<rect x="927.1" y="598.8" width="5" height="6.5" fill="#f6465d"/>
<rect x="937.7" y="603.9" width="1.1" height="7.1" fill="#f6465d"/>
<rect x="935.7" y="604.5" width="5" height="3.5" fill="#f6465d"/>
<rect x="946.2" y="607.0" width="1.1" height="18.8" fill="#f6465d"/>
<rect x="944.3" y="607.4" width="5" height="16.3" fill="#f6465d"/>
<rect x="954.8" y="614.1" width="1.1" height="10.2" fill="#0ecb81"/>
<rect x="952.9" y="614.7" width="5" height="9.0" fill="#0ecb81"/>
<rect x="963.4" y="612.1" width="1.1" height="5.5" fill="#f6465d"/>
<rect x="961.5" y="614.1" width="5" height="3.1" fill="#f6465d"/>
<rect x="972.0" y="612.1" width="1.1" height="5.5" fill="#0ecb81"/>
<rect x="970.0" y="613.1" width="5" height="4.1" fill="#0ecb81"/>
<rect x="980.6" y="608.0" width="1.1" height="6.1" fill="#0ecb81"/>
<rect x="978.6" y="608.6" width="5" height="4.9" fill="#0ecb81"/>
<rect x="989.1" y="604.9" width="1.1" height="4.5" fill="#0ecb81"/>
<rect x="987.2" y="606.0" width="5" height="3.0" fill="#0ecb81"/>
<rect x="997.7" y="599.0" width="1.1" height="8.2" fill="#0ecb81"/>
<rect x="995.8" y="600.0" width="5" height="6.8" fill="#0ecb81"/>
<rect x="1006.3" y="596.0" width="1.1" height="6.0" fill="#0ecb81"/>
<rect x="1004.4" y="598.0" width="5" height="2.0" fill="#0ecb81"/>
<rect x="1014.9" y="596.0" width="1.1" height="6.7" fill="#f6465d"/>
<rect x="1012.9" y="598.0" width="5" height="2.0" fill="#f6465d"/>
<rect x="1023.5" y="597.0" width="1.1" height="7.1" fill="#f6465d"/>
<rect x="1021.5" y="598.6" width="5" height="3.5" fill="#f6465d"/>
<rect x="1032.1" y="598.0" width="1.1" height="5.5" fill="#0ecb81"/>
<rect x="1030.1" y="598.6" width="5" height="2.9" fill="#0ecb81"/>
<rect x="1040.6" y="594.5" width="1.1" height="5.5" fill="#0ecb81"/>
<rect x="1038.7" y="597.0" width="5" height="2.4" fill="#0ecb81"/>
<rect x="1049.2" y="597.4" width="1.1" height="5.3" fill="#f6465d"/>
<rect x="1047.3" y="597.4" width="5" height="5.3" fill="#f6465d"/>
<rect x="1057.8" y="596.0" width="1.1" height="9.1" fill="#0ecb81"/>
<rect x="1055.8" y="598.6" width="5" height="3.5" fill="#0ecb81"/>
<rect x="1066.4" y="599.0" width="1.1" height="4.5" fill="#f6465d"/>
<rect x="1064.4" y="599.4" width="5" height="3.3" fill="#f6465d"/>
<rect x="1075.0" y="597.4" width="1.1" height="7.3" fill="#f6465d"/>
<rect x="1073.0" y="601.5" width="5" height="1.6" fill="#f6465d"/>
<rect x="1083.5" y="602.1" width="1.1" height="13.2" fill="#f6465d"/>
<rect x="1081.6" y="602.7" width="5" height="12.2" fill="#f6465d"/>
<rect x="1092.1" y="614.3" width="1.1" height="9.6" fill="#f6465d"/>
<rect x="1090.2" y="614.9" width="5" height="9.0" fill="#f6465d"/>
<rect x="1100.7" y="600.0" width="1.1" height="23.9" fill="#0ecb81"/>
<rect x="1098.8" y="603.5" width="5" height="20.4" fill="#0ecb81"/>
<rect x="1109.3" y="576.5" width="1.1" height="27.6" fill="#0ecb81"/>
<rect x="1107.3" y="578.6" width="5" height="25.5" fill="#0ecb81"/>
<rect x="1117.9" y="572.9" width="1.1" height="9.4" fill="#0ecb81"/>
<rect x="1115.9" y="578.2" width="5" height="2.0" fill="#0ecb81"/>
<rect x="1126.4" y="576.5" width="1.1" height="6.6" fill="#0ecb81"/>
<rect x="1124.5" y="577.0" width="5" height="2.0" fill="#0ecb81"/>
<rect x="1135.0" y="576.5" width="1.1" height="10.3" fill="#f6465d"/>
<rect x="1133.1" y="577.0" width="5" height="9.3" fill="#f6465d"/>
<rect x="1143.6" y="585.1" width="1.1" height="7.8" fill="#f6465d"/>
<rect x="1141.7" y="585.1" width="5" height="1.7" fill="#f6465d"/>
<rect x="1152.2" y="583.7" width="1.1" height="8.8" fill="#f6465d"/>
<rect x="1150.2" y="586.3" width="5" height="5.6" fill="#f6465d"/>
<rect x="1160.8" y="581.7" width="1.1" height="13.2" fill="#0ecb81"/>
<rect x="1158.8" y="584.7" width="5" height="7.2" fill="#0ecb81"/>
<rect x="1169.4" y="581.7" width="1.1" height="5.1" fill="#0ecb81"/>
<rect x="1167.4" y="583.7" width="5" height="1.6" fill="#0ecb81"/>
<rect x="1177.9" y="580.2" width="1.1" height="6.1" fill="#0ecb81"/>
<rect x="1176.0" y="580.6" width="5" height="3.7" fill="#0ecb81"/>
<rect x="1186.5" y="567.2" width="1.1" height="14.2" fill="#0ecb81"/>
<rect x="1184.6" y="574.3" width="5" height="6.7" fill="#0ecb81"/>
<rect x="1195.1" y="572.1" width="1.1" height="9.6" fill="#f6465d"/>
<rect x="1193.1" y="574.3" width="5" height="4.7" fill="#f6465d"/>
<rect x="1203.7" y="570.0" width="1.1" height="10.4" fill="#0ecb81"/>
<rect x="1201.7" y="570.0" width="5" height="9.5" fill="#0ecb81"/>
<rect x="1212.3" y="559.4" width="1.1" height="14.6" fill="#0ecb81"/>
<rect x="1210.3" y="564.3" width="5" height="6.6" fill="#0ecb81"/>
<rect x="1220.8" y="564.3" width="1.1" height="4.5" fill="#f6465d"/>
<rect x="1218.9" y="564.3" width="5" height="4.5" fill="#f6465d"/>
<rect x="1229.4" y="567.6" width="1.1" height="7.0" fill="#f6465d"/>
<rect x="1227.5" y="567.6" width="5" height="7.0" fill="#f6465d"/>
<rect x="1238.0" y="568.2" width="1.1" height="9.8" fill="#0ecb81"/>
<rect x="1236.1" y="568.2" width="5" height="5.8" fill="#0ecb81"/>
<rect x="1246.6" y="563.9" width="1.1" height="5.3" fill="#0ecb81"/>
<rect x="1244.6" y="567.2" width="5" height="1.6" fill="#0ecb81"/>
<rect x="1255.2" y="567.0" width="1.1" height="8.5" fill="#f6465d"/>
<rect x="1253.2" y="567.0" width="5" height="8.5" fill="#f6465d"/>
<rect x="1263.7" y="568.2" width="1.1" height="8.3" fill="#0ecb81"/>
<rect x="1261.8" y="568.2" width="5" height="7.3" fill="#0ecb81"/>
<rect x="1272.3" y="565.1" width="1.1" height="5.3" fill="#0ecb81"/>
<rect x="1270.4" y="567.2" width="5" height="1.6" fill="#0ecb81"/>
<rect x="1280.9" y="565.5" width="1.1" height="6.6" fill="#0ecb81"/>
<rect x="1279.0" y="565.5" width="5" height="2.1" fill="#0ecb81"/>
<rect x="1289.5" y="564.3" width="1.1" height="5.1" fill="#f6465d"/>
<rect x="1287.5" y="565.1" width="5" height="3.7" fill="#f6465d"/>
<rect x="1298.1" y="567.2" width="1.1" height="8.6" fill="#f6465d"/>
<rect x="1296.1" y="567.9" width="5" height="7.4" fill="#f6465d"/>
<rect x="1306.7" y="572.8" width="1.1" height="7.6" fill="#f6465d"/>
<rect x="1304.7" y="574.3" width="5" height="1.8" fill="#f6465d"/>
<rect x="1315.2" y="570.0" width="1.1" height="8.0" fill="#0ecb81"/>
<rect x="1313.3" y="572.1" width="5" height="4.0" fill="#0ecb81"/>
<rect x="1323.8" y="570.6" width="1.1" height="11.3" fill="#f6465d"/>
<rect x="1321.9" y="572.1" width="5" height="6.9" fill="#f6465d"/>
<rect x="1332.4" y="578.2" width="1.1" height="8.6" fill="#f6465d"/>
<rect x="1330.4" y="578.2" width="5" height="5.3" fill="#f6465d"/>
<rect x="1341.0" y="577.4" width="1.1" height="6.1" fill="#0ecb81"/>
<rect x="1339.0" y="577.4" width="5" height="6.1" fill="#0ecb81"/>
<rect x="1349.6" y="576.5" width="1.1" height="1.5" fill="#0ecb81"/>
<rect x="1347.6" y="576.5" width="5" height="1.6" fill="#0ecb81"/>
</g>
<g font-family='"Liberation Sans", sans-serif' font-size="11.5" fill="#262626">
<text x="123.0" y="862.5" text-anchor="middle">03, 21:00</text><text x="191.6" y="862.5" text-anchor="middle">03, 21:40</text><text x="260.3" y="862.5" text-anchor="middle">03, 22:20</text><text x="328.9" y="862.5" text-anchor="middle">03, 23:00</text><text x="397.6" y="862.5" text-anchor="middle">03, 23:40</text><text x="466.2" y="862.5" text-anchor="middle">04, 00:20</text><text x="534.9" y="862.5" text-anchor="middle">04, 01:00</text><text x="603.5" y="862.5" text-anchor="middle">04, 01:40</text><text x="672.2" y="862.5" text-anchor="middle">04, 02:20</text><text x="740.8" y="862.5" text-anchor="middle">04, 03:00</text><text x="809.5" y="862.5" text-anchor="middle">04, 03:40</text><text x="878.1" y="862.5" text-anchor="middle">04, 04:20</text><text x="946.8" y="862.5" text-anchor="middle">04, 05:00</text><text x="1015.4" y="862.5" text-anchor="middle">04, 05:40</text><text x="1084.1" y="862.5" text-anchor="middle">04, 06:20</text><text x="1152.7" y="862.5" text-anchor="middle">04, 07:00</text><text x="1221.4" y="862.5" text-anchor="middle">04, 07:40</text><text x="1290.0" y="862.5" text-anchor="middle">04, 08:20</text>
<text x="1362.5" y="259.2">4065</text><text x="1362.5" y="307.2">4000</text><text x="1362.5" y="454.7">3800</text><text x="1362.5" y="602.2">3600</text><text x="1362.5" y="749.7">3400</text><text x="1362.5" y="849.2">3265</text>
</g>
</svg>
<div class="wm" style="left:1216px;top:787px;font-size:19.5px">Activate Windows</div>
<div class="wm" style="left:1216px;top:812px;font-size:14.9px">Go to Settings to activate Windows.</div>
<div class="abs" style="left:1257px;top:802px;font-size:15.6px;font-weight:bold;color:rgba(160,160,165,0.85)">coinglass</div>
<svg class="abs" style="left:1231px;top:797px" width="18" height="26" viewBox="0 0 18 26"><g fill="rgba(165,160,175,0.9)"><path d="M2 3 L5 6 Q9 4.5 13 6 L16 3 L16.5 9 Q17 14 13 15.5 L4.5 15.5 Q1 14 1.5 9 Z"/><ellipse cx="9" cy="18.5" rx="7" ry="6"/></g></svg>
</body></html>
